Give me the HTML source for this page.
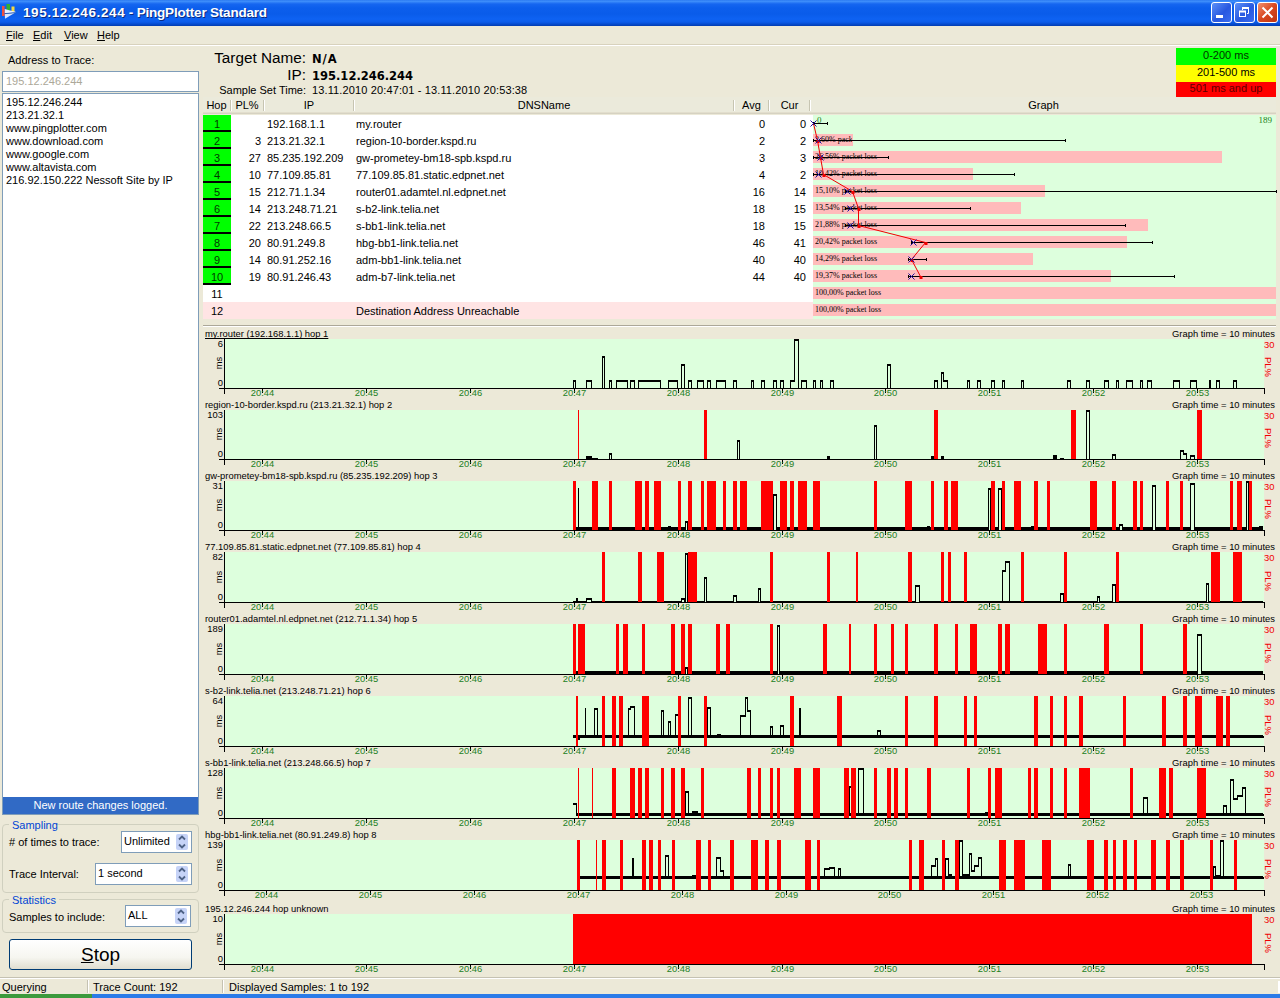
<!DOCTYPE html>
<html><head><meta charset="utf-8"><title>195.12.246.244 - PingPlotter Standard</title>
<style>
html,body{margin:0;padding:0;}
body{width:1280px;height:998px;overflow:hidden;background:#ECE9D8;font-family:"Liberation Sans", sans-serif;font-size:11px;position:relative;}
#r{position:absolute;left:0;top:0;width:1280px;height:998px;overflow:hidden;background:#ECE9D8;}
#r div{position:absolute;box-sizing:border-box;}
#r svg{position:absolute;left:0;top:0;}
.t{white-space:nowrap;line-height:13px;}
u{text-decoration:underline;}
</style></head><body><div id="r">
<div style="left:0;top:0;width:1280px;height:26px;background:linear-gradient(to bottom,#2E7CF2 0px,#3C8CFA 1.5px,#1666F0 4px,#0C5EEC 8px,#0A5CEA 14px,#0E62F2 19px,#0C5CEA 22px,#064CD0 24px,#0340B8 25.5px,#0340B8 26px);"></div>
<svg width="26" height="26" viewBox="0 0 26 26"><rect x="2" y="6" width="2.600" height="10" fill="#F0503C"/><rect x="6.500" y="4" width="3.500" height="6.500" fill="#30B030"/><rect x="11.500" y="6.500" width="3" height="5.500" fill="#F4D840"/><path d="M4.800 9 L10 10.500 L15.500 11.800 L15.500 12.600 L4.800 13.300 Z" fill="#E8F0FF"/><path d="M4.800 14 L15 12.800 L5 18.700 Z" fill="#D8E6FF"/><path d="M4.800 13.600 L15.500 12.700" stroke="#1A4AA0" stroke-width="0.700"/></svg>
<div class="t" style="left:23px;top:4px;font-size:13.5px;color:#fff;font-weight:bold;line-height:18px;letter-spacing:-0.2px;text-shadow:1px 1px 0 #0A2A80;"><span style="letter-spacing:0.6px">195.12.246.244</span> - PingPlotter Standard</div>
<div style="left:1211px;top:2px;width:21px;height:21px;border:1px solid #fff;border-radius:3px;background:linear-gradient(135deg,#5C90F8,#2858E0 55%,#3A6CF0);"></div>
<svg width="1280" height="26" viewBox="0 0 1280 26"><rect x="1216" y="15" width="7" height="3" fill="#fff"/></svg>
<div style="left:1234px;top:2px;width:21px;height:21px;border:1px solid #fff;border-radius:3px;background:linear-gradient(135deg,#5C90F8,#2858E0 55%,#3A6CF0);"></div>
<svg width="1280" height="26" viewBox="0 0 1280 26"><path d="M1242.500 10 V8 H1248.500 V13.500 H1247" fill="none" stroke="#fff" stroke-width="1"/><rect x="1242" y="7" width="7" height="2" fill="#fff"/><rect x="1239.500" y="11.500" width="6" height="5" fill="none" stroke="#fff" stroke-width="1"/><rect x="1239" y="10.500" width="7" height="2" fill="#fff"/></svg>
<div style="left:1257px;top:2px;width:21px;height:21px;border:1px solid #fff;border-radius:3px;background:linear-gradient(135deg,#F09070,#D84820 50%,#C03410);"></div>
<svg width="1280" height="26" viewBox="0 0 1280 26"><path d="M1262.500 7.500 L1272.500 17.500 M1272.500 7.500 L1262.500 17.500" stroke="#fff" stroke-width="2" fill="none"/></svg>
<div style="left:0px;top:45px;width:1280px;height:1px;background:#fff;"></div>
<div style="left:0px;top:44px;width:1280px;height:1px;background:#D8D2BD;"></div>
<div class="t" style="left:6px;top:29px;font-size:11px;color:#000;"><u>F</u>ile</div>
<div class="t" style="left:33px;top:29px;font-size:11px;color:#000;"><u>E</u>dit</div>
<div class="t" style="left:64px;top:29px;font-size:11px;color:#000;"><u>V</u>iew</div>
<div class="t" style="left:97px;top:29px;font-size:11px;color:#000;"><u>H</u>elp</div>
<div class="t" style="left:8px;top:54px;font-size:11px;color:#000;">Address to Trace:</div>
<div style="left:2px;top:71px;width:197px;height:21px;background:#fff;border:1px solid #7F9DB9;"></div>
<div class="t" style="left:6px;top:75px;font-size:11px;color:#ACA899;">195.12.246.244</div>
<div style="left:2px;top:93px;width:197px;height:722px;background:#fff;border:1px solid #7F9DB9;"></div>
<div class="t" style="left:6px;top:96px;font-size:11px;color:#000;">195.12.246.244</div>
<div class="t" style="left:6px;top:109px;font-size:11px;color:#000;">213.21.32.1</div>
<div class="t" style="left:6px;top:122px;font-size:11px;color:#000;">www.pingplotter.com</div>
<div class="t" style="left:6px;top:135px;font-size:11px;color:#000;">www.download.com</div>
<div class="t" style="left:6px;top:148px;font-size:11px;color:#000;">www.google.com</div>
<div class="t" style="left:6px;top:161px;font-size:11px;color:#000;">www.altavista.com</div>
<div class="t" style="left:6px;top:174px;font-size:11px;color:#000;">216.92.150.222 Nessoft Site by IP</div>
<div style="left:3px;top:797px;width:195px;height:17px;background:#316AC5;"></div>
<div class="t" style="left:3px;top:799px;font-size:11px;color:#fff;width:195px;text-align:center;">New route changes logged.</div>
<div style="left:2px;top:824px;width:197px;height:69px;border:1px solid #D0D0BF;border-radius:4px;"></div>
<div style="left:9px;top:823px;width:48px;height:4px;background:#ECE9D8;"></div>
<div class="t" style="left:12px;top:819px;font-size:11px;color:#0046D5;">Sampling</div>
<div style="left:2px;top:899px;width:197px;height:34px;border:1px solid #D0D0BF;border-radius:4px;"></div>
<div style="left:9px;top:898px;width:50px;height:4px;background:#ECE9D8;"></div>
<div class="t" style="left:12px;top:894px;font-size:11px;color:#0046D5;">Statistics</div>
<div class="t" style="left:9px;top:836px;font-size:11px;color:#000;"># of times to trace:</div>
<div style="left:121px;top:831px;width:71px;height:22px;background:#fff;border:1px solid #7F9DB9;"></div>
<div class="t" style="left:124px;top:835px;font-size:11px;color:#000;">Unlimited</div>
<div style="left:176px;top:834px;width:12px;height:16px;background:#C6D3F7;border-radius:2px;"></div>
<svg width="1280" height="998" viewBox="0 0 1280 998"><path d="M179 839.5 L182 836.5 L185 839.5 M179 844.5 L182 847.5 L185 844.5" stroke="#4D6185" stroke-width="1.800" fill="none"/></svg>
<div class="t" style="left:9px;top:868px;font-size:11px;color:#000;">Trace Interval:</div>
<div style="left:95px;top:863px;width:97px;height:22px;background:#fff;border:1px solid #7F9DB9;"></div>
<div class="t" style="left:98px;top:867px;font-size:11px;color:#000;">1 second</div>
<div style="left:176px;top:866px;width:12px;height:16px;background:#C6D3F7;border-radius:2px;"></div>
<svg width="1280" height="998" viewBox="0 0 1280 998"><path d="M179 871.5 L182 868.5 L185 871.5 M179 876.5 L182 879.5 L185 876.5" stroke="#4D6185" stroke-width="1.800" fill="none"/></svg>
<div class="t" style="left:9px;top:911px;font-size:11px;color:#000;">Samples to include:</div>
<div style="left:125px;top:905px;width:66px;height:22px;background:#fff;border:1px solid #7F9DB9;"></div>
<div class="t" style="left:128px;top:909px;font-size:11px;color:#000;">ALL</div>
<div style="left:175px;top:908px;width:12px;height:16px;background:#C6D3F7;border-radius:2px;"></div>
<svg width="1280" height="998" viewBox="0 0 1280 998"><path d="M178 913.5 L181 910.5 L184 913.5 M178 918.5 L181 921.5 L184 918.5" stroke="#4D6185" stroke-width="1.800" fill="none"/></svg>
<div style="left:9px;top:939px;width:183px;height:31px;border:1px solid #003C74;border-radius:3px;background:linear-gradient(to bottom,#fff 0%,#F6F6F0 60%,#E0DED0 100%);"></div>
<div class="t" style="left:9px;top:943px;font-size:19px;color:#000;width:183px;text-align:center;line-height:24px;"><u>S</u>top</div>
<div class="t" style="left:150px;top:49px;font-size:15.3px;color:#000;width:156px;text-align:right;line-height:18px;">Target Name:</div>
<div class="t" style="left:312px;top:51px;font-size:11.5px;color:#000;letter-spacing:1px;font-weight:bold;line-height:16px;font-family:'DejaVu Sans',sans-serif;">N/A</div>
<div class="t" style="left:150px;top:66px;font-size:15.3px;color:#000;width:156px;text-align:right;line-height:18px;">IP:</div>
<div class="t" style="left:312px;top:68px;font-size:11.5px;color:#000;font-weight:bold;line-height:16px;font-family:'DejaVu Sans',sans-serif;">195.12.246.244</div>
<div class="t" style="left:150px;top:84px;font-size:11px;color:#000;width:156px;text-align:right;">Sample Set Time:</div>
<div class="t" style="left:312px;top:84px;font-size:11px;color:#000;letter-spacing:0.13px;">13.11.2010 20:47:01 - 13.11.2010 20:53:38</div>
<div style="left:1176px;top:48px;width:100px;height:17px;background:#00FF00;"></div>
<div style="left:1176px;top:65px;width:100px;height:17px;background:#FFFF00;"></div>
<div style="left:1176px;top:82px;width:100px;height:16px;background:#FF0000;"></div>
<div class="t" style="left:1176px;top:49px;font-size:11px;color:#003000;width:100px;text-align:center;">0-200 ms</div>
<div class="t" style="left:1176px;top:66px;font-size:11px;color:#000;width:100px;text-align:center;">201-500 ms</div>
<div class="t" style="left:1176px;top:82px;font-size:11px;color:#600000;width:100px;text-align:center;">501 ms and up</div>
<div style="left:203px;top:97px;width:1073px;height:17px;background:#EBEADB;"></div>
<div style="left:203px;top:112px;width:1073px;height:1px;background:#E2DECD;"></div>
<div style="left:203px;top:113px;width:1073px;height:1px;background:#D6D2C2;"></div>
<div style="left:230px;top:100px;width:1px;height:11px;background:#C7C5B2;"></div>
<div style="left:231px;top:100px;width:1px;height:11px;background:#fff;"></div>
<div style="left:263px;top:100px;width:1px;height:11px;background:#C7C5B2;"></div>
<div style="left:264px;top:100px;width:1px;height:11px;background:#fff;"></div>
<div style="left:353px;top:100px;width:1px;height:11px;background:#C7C5B2;"></div>
<div style="left:354px;top:100px;width:1px;height:11px;background:#fff;"></div>
<div style="left:733px;top:100px;width:1px;height:11px;background:#C7C5B2;"></div>
<div style="left:734px;top:100px;width:1px;height:11px;background:#fff;"></div>
<div style="left:768px;top:100px;width:1px;height:11px;background:#C7C5B2;"></div>
<div style="left:769px;top:100px;width:1px;height:11px;background:#fff;"></div>
<div style="left:809px;top:100px;width:1px;height:11px;background:#C7C5B2;"></div>
<div style="left:810px;top:100px;width:1px;height:11px;background:#fff;"></div>
<div class="t" style="left:203px;top:99px;font-size:11px;color:#000;width:27px;text-align:center;">Hop</div>
<div class="t" style="left:231px;top:99px;font-size:11px;color:#000;width:32px;text-align:center;">PL%</div>
<div class="t" style="left:265px;top:99px;font-size:11px;color:#000;width:88px;text-align:center;">IP</div>
<div class="t" style="left:355px;top:99px;font-size:11px;color:#000;width:378px;text-align:center;">DNSName</div>
<div class="t" style="left:735px;top:99px;font-size:11px;color:#000;width:33px;text-align:center;">Avg</div>
<div class="t" style="left:770px;top:99px;font-size:11px;color:#000;width:39px;text-align:center;">Cur</div>
<div class="t" style="left:811px;top:99px;font-size:11px;color:#000;width:465px;text-align:center;">Graph</div>
<div style="left:203px;top:115px;width:610px;height:204px;background:#fff;"></div>
<div style="left:813px;top:115px;width:463px;height:204px;background:#DDFFDD;"></div>
<div style="left:203px;top:302px;width:610px;height:17px;background:#FFE4E4;"></div>
<div style="left:203px;top:115px;width:28px;height:17px;background:#00FF00;"></div>
<div style="left:203px;top:130px;width:28px;height:2px;background:#000;"></div>
<div class="t" style="left:203px;top:118px;font-size:11px;color:#003800;width:28px;text-align:center;">1</div>
<div class="t" style="left:267px;top:118px;font-size:11px;color:#000;">192.168.1.1</div>
<div class="t" style="left:356px;top:118px;font-size:11px;color:#000;">my.router</div>
<div class="t" style="left:735px;top:118px;font-size:11px;color:#000;width:30px;text-align:right;">0</div>
<div class="t" style="left:775px;top:118px;font-size:11px;color:#000;width:31px;text-align:right;">0</div>
<div style="left:203px;top:132px;width:28px;height:17px;background:#00FF00;"></div>
<div style="left:203px;top:147px;width:28px;height:2px;background:#000;"></div>
<div class="t" style="left:203px;top:135px;font-size:11px;color:#003800;width:28px;text-align:center;">2</div>
<div class="t" style="left:231px;top:135px;font-size:11px;color:#000;width:30px;text-align:right;">3</div>
<div class="t" style="left:267px;top:135px;font-size:11px;color:#000;">213.21.32.1</div>
<div class="t" style="left:356px;top:135px;font-size:11px;color:#000;">region-10-border.kspd.ru</div>
<div class="t" style="left:735px;top:135px;font-size:11px;color:#000;width:30px;text-align:right;">2</div>
<div class="t" style="left:775px;top:135px;font-size:11px;color:#000;width:31px;text-align:right;">2</div>
<div style="left:203px;top:149px;width:28px;height:17px;background:#00FF00;"></div>
<div style="left:203px;top:164px;width:28px;height:2px;background:#000;"></div>
<div class="t" style="left:203px;top:152px;font-size:11px;color:#003800;width:28px;text-align:center;">3</div>
<div class="t" style="left:231px;top:152px;font-size:11px;color:#000;width:30px;text-align:right;">27</div>
<div class="t" style="left:267px;top:152px;font-size:11px;color:#000;">85.235.192.209</div>
<div class="t" style="left:356px;top:152px;font-size:11px;color:#000;">gw-prometey-bm18-spb.kspd.ru</div>
<div class="t" style="left:735px;top:152px;font-size:11px;color:#000;width:30px;text-align:right;">3</div>
<div class="t" style="left:775px;top:152px;font-size:11px;color:#000;width:31px;text-align:right;">3</div>
<div style="left:203px;top:166px;width:28px;height:17px;background:#00FF00;"></div>
<div style="left:203px;top:181px;width:28px;height:2px;background:#000;"></div>
<div class="t" style="left:203px;top:169px;font-size:11px;color:#003800;width:28px;text-align:center;">4</div>
<div class="t" style="left:231px;top:169px;font-size:11px;color:#000;width:30px;text-align:right;">10</div>
<div class="t" style="left:267px;top:169px;font-size:11px;color:#000;">77.109.85.81</div>
<div class="t" style="left:356px;top:169px;font-size:11px;color:#000;">77.109.85.81.static.edpnet.net</div>
<div class="t" style="left:735px;top:169px;font-size:11px;color:#000;width:30px;text-align:right;">4</div>
<div class="t" style="left:775px;top:169px;font-size:11px;color:#000;width:31px;text-align:right;">2</div>
<div style="left:203px;top:183px;width:28px;height:17px;background:#00FF00;"></div>
<div style="left:203px;top:198px;width:28px;height:2px;background:#000;"></div>
<div class="t" style="left:203px;top:186px;font-size:11px;color:#003800;width:28px;text-align:center;">5</div>
<div class="t" style="left:231px;top:186px;font-size:11px;color:#000;width:30px;text-align:right;">15</div>
<div class="t" style="left:267px;top:186px;font-size:11px;color:#000;">212.71.1.34</div>
<div class="t" style="left:356px;top:186px;font-size:11px;color:#000;">router01.adamtel.nl.edpnet.net</div>
<div class="t" style="left:735px;top:186px;font-size:11px;color:#000;width:30px;text-align:right;">16</div>
<div class="t" style="left:775px;top:186px;font-size:11px;color:#000;width:31px;text-align:right;">14</div>
<div style="left:203px;top:200px;width:28px;height:17px;background:#00FF00;"></div>
<div style="left:203px;top:215px;width:28px;height:2px;background:#000;"></div>
<div class="t" style="left:203px;top:203px;font-size:11px;color:#003800;width:28px;text-align:center;">6</div>
<div class="t" style="left:231px;top:203px;font-size:11px;color:#000;width:30px;text-align:right;">14</div>
<div class="t" style="left:267px;top:203px;font-size:11px;color:#000;">213.248.71.21</div>
<div class="t" style="left:356px;top:203px;font-size:11px;color:#000;">s-b2-link.telia.net</div>
<div class="t" style="left:735px;top:203px;font-size:11px;color:#000;width:30px;text-align:right;">18</div>
<div class="t" style="left:775px;top:203px;font-size:11px;color:#000;width:31px;text-align:right;">15</div>
<div style="left:203px;top:217px;width:28px;height:17px;background:#00FF00;"></div>
<div style="left:203px;top:232px;width:28px;height:2px;background:#000;"></div>
<div class="t" style="left:203px;top:220px;font-size:11px;color:#003800;width:28px;text-align:center;">7</div>
<div class="t" style="left:231px;top:220px;font-size:11px;color:#000;width:30px;text-align:right;">22</div>
<div class="t" style="left:267px;top:220px;font-size:11px;color:#000;">213.248.66.5</div>
<div class="t" style="left:356px;top:220px;font-size:11px;color:#000;">s-bb1-link.telia.net</div>
<div class="t" style="left:735px;top:220px;font-size:11px;color:#000;width:30px;text-align:right;">18</div>
<div class="t" style="left:775px;top:220px;font-size:11px;color:#000;width:31px;text-align:right;">15</div>
<div style="left:203px;top:234px;width:28px;height:17px;background:#00FF00;"></div>
<div style="left:203px;top:249px;width:28px;height:2px;background:#000;"></div>
<div class="t" style="left:203px;top:237px;font-size:11px;color:#003800;width:28px;text-align:center;">8</div>
<div class="t" style="left:231px;top:237px;font-size:11px;color:#000;width:30px;text-align:right;">20</div>
<div class="t" style="left:267px;top:237px;font-size:11px;color:#000;">80.91.249.8</div>
<div class="t" style="left:356px;top:237px;font-size:11px;color:#000;">hbg-bb1-link.telia.net</div>
<div class="t" style="left:735px;top:237px;font-size:11px;color:#000;width:30px;text-align:right;">46</div>
<div class="t" style="left:775px;top:237px;font-size:11px;color:#000;width:31px;text-align:right;">41</div>
<div style="left:203px;top:251px;width:28px;height:17px;background:#00FF00;"></div>
<div style="left:203px;top:266px;width:28px;height:2px;background:#000;"></div>
<div class="t" style="left:203px;top:254px;font-size:11px;color:#003800;width:28px;text-align:center;">9</div>
<div class="t" style="left:231px;top:254px;font-size:11px;color:#000;width:30px;text-align:right;">14</div>
<div class="t" style="left:267px;top:254px;font-size:11px;color:#000;">80.91.252.16</div>
<div class="t" style="left:356px;top:254px;font-size:11px;color:#000;">adm-bb1-link.telia.net</div>
<div class="t" style="left:735px;top:254px;font-size:11px;color:#000;width:30px;text-align:right;">40</div>
<div class="t" style="left:775px;top:254px;font-size:11px;color:#000;width:31px;text-align:right;">40</div>
<div style="left:203px;top:268px;width:28px;height:17px;background:#00FF00;"></div>
<div style="left:203px;top:283px;width:28px;height:2px;background:#000;"></div>
<div class="t" style="left:203px;top:271px;font-size:11px;color:#003800;width:28px;text-align:center;">10</div>
<div class="t" style="left:231px;top:271px;font-size:11px;color:#000;width:30px;text-align:right;">19</div>
<div class="t" style="left:267px;top:271px;font-size:11px;color:#000;">80.91.246.43</div>
<div class="t" style="left:356px;top:271px;font-size:11px;color:#000;">adm-b7-link.telia.net</div>
<div class="t" style="left:735px;top:271px;font-size:11px;color:#000;width:30px;text-align:right;">44</div>
<div class="t" style="left:775px;top:271px;font-size:11px;color:#000;width:31px;text-align:right;">40</div>
<div class="t" style="left:203px;top:288px;font-size:11px;color:#000;width:28px;text-align:center;">11</div>
<div class="t" style="left:203px;top:305px;font-size:11px;color:#000;width:28px;text-align:center;">12</div>
<div class="t" style="left:356px;top:305px;font-size:11px;color:#000;">Destination Address Unreachable</div>
<svg width="1280" height="330" viewBox="0 0 1280 330" shape-rendering="crispEdges"><rect x="813" y="134" width="40" height="12" fill="#FFBBBB"/><rect x="813" y="151" width="409" height="12" fill="#FFBBBB"/><rect x="813" y="168" width="160" height="12" fill="#FFBBBB"/><rect x="813" y="185" width="232" height="12" fill="#FFBBBB"/><rect x="813" y="202" width="208" height="12" fill="#FFBBBB"/><rect x="813" y="219" width="335" height="12" fill="#FFBBBB"/><rect x="813" y="236" width="314" height="12" fill="#FFBBBB"/><rect x="813" y="253" width="220" height="12" fill="#FFBBBB"/><rect x="813" y="270" width="298" height="12" fill="#FFBBBB"/><rect x="813" y="287" width="463" height="12" fill="#FFBBBB"/><rect x="813" y="304" width="463" height="12" fill="#FFBBBB"/></svg>
<div class="t" style="left:815px;top:134px;width:37px;overflow:hidden;font-family:'Liberation Serif',serif;font-size:8px;line-height:12px;color:#000;">2,60% pack</div>
<div class="t" style="left:815px;top:151px;width:406px;overflow:hidden;font-family:'Liberation Serif',serif;font-size:8px;line-height:12px;color:#000;">26,56% packet loss</div>
<div class="t" style="left:815px;top:168px;width:157px;overflow:hidden;font-family:'Liberation Serif',serif;font-size:8px;line-height:12px;color:#000;">10,42% packet loss</div>
<div class="t" style="left:815px;top:185px;width:229px;overflow:hidden;font-family:'Liberation Serif',serif;font-size:8px;line-height:12px;color:#000;">15,10% packet loss</div>
<div class="t" style="left:815px;top:202px;width:205px;overflow:hidden;font-family:'Liberation Serif',serif;font-size:8px;line-height:12px;color:#000;">13,54% packet loss</div>
<div class="t" style="left:815px;top:219px;width:332px;overflow:hidden;font-family:'Liberation Serif',serif;font-size:8px;line-height:12px;color:#000;">21,88% packet loss</div>
<div class="t" style="left:815px;top:236px;width:311px;overflow:hidden;font-family:'Liberation Serif',serif;font-size:8px;line-height:12px;color:#000;">20,42% packet loss</div>
<div class="t" style="left:815px;top:253px;width:217px;overflow:hidden;font-family:'Liberation Serif',serif;font-size:8px;line-height:12px;color:#000;">14,29% packet loss</div>
<div class="t" style="left:815px;top:270px;width:295px;overflow:hidden;font-family:'Liberation Serif',serif;font-size:8px;line-height:12px;color:#000;">19,37% packet loss</div>
<div class="t" style="left:815px;top:287px;width:460px;overflow:hidden;font-family:'Liberation Serif',serif;font-size:8px;line-height:12px;color:#000;">100,00% packet loss</div>
<div class="t" style="left:815px;top:304px;width:460px;overflow:hidden;font-family:'Liberation Serif',serif;font-size:8px;line-height:12px;color:#000;">100,00% packet loss</div>
<svg width="1280" height="330" viewBox="0 0 1280 330"><path d="M813 123.5 H827 M827.5 122 V125 M813.5 122 V125" stroke="#000" stroke-width="1" fill="none" shape-rendering="crispEdges"/><path d="M813 140.5 H1065 M1065.5 139 V142 M813.5 139 V142" stroke="#000" stroke-width="1" fill="none" shape-rendering="crispEdges"/><path d="M813 157.5 H888 M888.5 156 V159 M813.5 156 V159" stroke="#000" stroke-width="1" fill="none" shape-rendering="crispEdges"/><path d="M813 174.5 H1014 M1014.5 173 V176 M813.5 173 V176" stroke="#000" stroke-width="1" fill="none" shape-rendering="crispEdges"/><path d="M845 191.5 H1276 M1276.5 190 V193 M845.5 190 V193" stroke="#000" stroke-width="1" fill="none" shape-rendering="crispEdges"/><path d="M845 208.5 H970 M970.5 207 V210 M845.5 207 V210" stroke="#000" stroke-width="1" fill="none" shape-rendering="crispEdges"/><path d="M845 225.5 H1125 M1125.5 224 V227 M845.5 224 V227" stroke="#000" stroke-width="1" fill="none" shape-rendering="crispEdges"/><path d="M911 242.5 H1152 M1152.5 241 V244 M911.5 241 V244" stroke="#000" stroke-width="1" fill="none" shape-rendering="crispEdges"/><path d="M908 259.5 H926 M926.5 258 V261 M908.5 258 V261" stroke="#000" stroke-width="1" fill="none" shape-rendering="crispEdges"/><path d="M908 276.5 H1174 M1174.5 275 V278 M908.5 275 V278" stroke="#000" stroke-width="1" fill="none" shape-rendering="crispEdges"/><polyline points="813.5,123.5 817.5,140.5 820.5,157.5 823.5,174.5 852.5,191.5 858.5,208.5 858.5,225.5 925.5,242.5 911.5,259.5 920.5,276.5" stroke="#F00000" stroke-width="1" fill="none"/><rect x="816.5" y="140.0" width="3" height="3" fill="#F00000"/><rect x="819.5" y="157.0" width="3" height="3" fill="#F00000"/><rect x="822.5" y="174.0" width="3" height="3" fill="#F00000"/><rect x="851.5" y="191.0" width="3" height="3" fill="#F00000"/><rect x="857.5" y="208.0" width="3" height="3" fill="#F00000"/><rect x="857.5" y="225.0" width="3" height="3" fill="#F00000"/><rect x="924.5" y="242.0" width="3" height="3" fill="#F00000"/><rect x="910.5" y="259.0" width="3" height="3" fill="#F00000"/><rect x="919.5" y="276.0" width="3" height="3" fill="#F00000"/><path d="M810.5 120.5 L816.5 126.5 M816.5 120.5 L810.5 126.5" stroke="#2010A0" stroke-width="1" fill="none"/><path d="M815.5 137.5 L821.5 143.5 M821.5 137.5 L815.5 143.5" stroke="#2010A0" stroke-width="1" fill="none"/><path d="M817.5 154.5 L823.5 160.5 M823.5 154.5 L817.5 160.5" stroke="#2010A0" stroke-width="1" fill="none"/><path d="M815.5 171.5 L821.5 177.5 M821.5 171.5 L815.5 177.5" stroke="#2010A0" stroke-width="1" fill="none"/><path d="M844.5 188.5 L850.5 194.5 M850.5 188.5 L844.5 194.5" stroke="#2010A0" stroke-width="1" fill="none"/><path d="M847.5 205.5 L853.5 211.5 M853.5 205.5 L847.5 211.5" stroke="#2010A0" stroke-width="1" fill="none"/><path d="M847.5 222.5 L853.5 228.5 M853.5 222.5 L847.5 228.5" stroke="#2010A0" stroke-width="1" fill="none"/><path d="M910.5 239.5 L916.5 245.5 M916.5 239.5 L910.5 245.5" stroke="#2010A0" stroke-width="1" fill="none"/><path d="M908.5 256.5 L914.5 262.5 M914.5 256.5 L908.5 262.5" stroke="#2010A0" stroke-width="1" fill="none"/><path d="M908.5 273.5 L914.5 279.5 M914.5 273.5 L908.5 279.5" stroke="#2010A0" stroke-width="1" fill="none"/></svg>
<div class="t" style="left:817px;top:115px;font-size:9px;color:#208020;font-family:'Liberation Serif',serif;line-height:11px;">0</div>
<div class="t" style="left:1240px;top:115px;font-size:9px;color:#208020;width:32px;text-align:right;font-family:'Liberation Serif',serif;line-height:11px;">189</div>
<div style="left:203px;top:325px;width:1073px;height:1px;background:#ACA899;"></div>
<div style="left:203px;top:326px;width:1073px;height:1px;background:#fff;"></div>
<svg width="1280" height="998" viewBox="0 0 1280 998" shape-rendering="crispEdges"><rect x="225" y="339" width="1039" height="49" fill="#DDFFDD"/><rect x="573" y="380" width="3" height="8" fill="#DDFFDD"/><rect x="573" y="380" width="1" height="8" fill="#000"/><rect x="575" y="380" width="1" height="8" fill="#000"/><rect x="573" y="380" width="3" height="2" fill="#000"/><rect x="586" y="380" width="6" height="8" fill="#DDFFDD"/><rect x="586" y="380" width="1" height="8" fill="#000"/><rect x="591" y="380" width="1" height="8" fill="#000"/><rect x="586" y="380" width="6" height="2" fill="#000"/><rect x="602" y="356" width="3" height="32" fill="#DDFFDD"/><rect x="602" y="356" width="1" height="32" fill="#000"/><rect x="604" y="356" width="1" height="32" fill="#000"/><rect x="602" y="356" width="3" height="2" fill="#000"/><rect x="609" y="380" width="3" height="8" fill="#DDFFDD"/><rect x="609" y="380" width="1" height="8" fill="#000"/><rect x="611" y="380" width="1" height="8" fill="#000"/><rect x="609" y="380" width="3" height="2" fill="#000"/><rect x="616" y="380" width="12" height="8" fill="#DDFFDD"/><rect x="616" y="380" width="1" height="8" fill="#000"/><rect x="627" y="380" width="1" height="8" fill="#000"/><rect x="616" y="380" width="12" height="2" fill="#000"/><rect x="630" y="380" width="5" height="8" fill="#DDFFDD"/><rect x="630" y="380" width="1" height="8" fill="#000"/><rect x="634" y="380" width="1" height="8" fill="#000"/><rect x="630" y="380" width="5" height="2" fill="#000"/><rect x="638" y="380" width="23" height="8" fill="#DDFFDD"/><rect x="638" y="380" width="1" height="8" fill="#000"/><rect x="660" y="380" width="1" height="8" fill="#000"/><rect x="638" y="380" width="23" height="2" fill="#000"/><rect x="668" y="380" width="10" height="8" fill="#DDFFDD"/><rect x="668" y="380" width="1" height="8" fill="#000"/><rect x="677" y="380" width="1" height="8" fill="#000"/><rect x="668" y="380" width="10" height="2" fill="#000"/><rect x="681" y="364" width="4" height="24" fill="#DDFFDD"/><rect x="681" y="364" width="1" height="24" fill="#000"/><rect x="684" y="364" width="1" height="24" fill="#000"/><rect x="681" y="364" width="4" height="2" fill="#000"/><rect x="688" y="380" width="4" height="8" fill="#DDFFDD"/><rect x="688" y="380" width="1" height="8" fill="#000"/><rect x="691" y="380" width="1" height="8" fill="#000"/><rect x="688" y="380" width="4" height="2" fill="#000"/><rect x="697" y="380" width="7" height="8" fill="#DDFFDD"/><rect x="697" y="380" width="1" height="8" fill="#000"/><rect x="703" y="380" width="1" height="8" fill="#000"/><rect x="697" y="380" width="7" height="2" fill="#000"/><rect x="707" y="380" width="4" height="8" fill="#DDFFDD"/><rect x="707" y="380" width="1" height="8" fill="#000"/><rect x="710" y="380" width="1" height="8" fill="#000"/><rect x="707" y="380" width="4" height="2" fill="#000"/><rect x="716" y="380" width="10" height="8" fill="#DDFFDD"/><rect x="716" y="380" width="1" height="8" fill="#000"/><rect x="725" y="380" width="1" height="8" fill="#000"/><rect x="716" y="380" width="10" height="2" fill="#000"/><rect x="733" y="380" width="4" height="8" fill="#DDFFDD"/><rect x="733" y="380" width="1" height="8" fill="#000"/><rect x="736" y="380" width="1" height="8" fill="#000"/><rect x="733" y="380" width="4" height="2" fill="#000"/><rect x="751" y="380" width="3" height="8" fill="#DDFFDD"/><rect x="751" y="380" width="1" height="8" fill="#000"/><rect x="753" y="380" width="1" height="8" fill="#000"/><rect x="751" y="380" width="3" height="2" fill="#000"/><rect x="761" y="380" width="4" height="8" fill="#DDFFDD"/><rect x="761" y="380" width="1" height="8" fill="#000"/><rect x="764" y="380" width="1" height="8" fill="#000"/><rect x="761" y="380" width="4" height="2" fill="#000"/><rect x="773" y="380" width="4" height="8" fill="#DDFFDD"/><rect x="773" y="380" width="1" height="8" fill="#000"/><rect x="776" y="380" width="1" height="8" fill="#000"/><rect x="773" y="380" width="4" height="2" fill="#000"/><rect x="780" y="380" width="4" height="8" fill="#DDFFDD"/><rect x="780" y="380" width="1" height="8" fill="#000"/><rect x="783" y="380" width="1" height="8" fill="#000"/><rect x="780" y="380" width="4" height="2" fill="#000"/><rect x="801" y="380" width="6" height="8" fill="#DDFFDD"/><rect x="801" y="380" width="1" height="8" fill="#000"/><rect x="806" y="380" width="1" height="8" fill="#000"/><rect x="801" y="380" width="6" height="2" fill="#000"/><rect x="813" y="380" width="3" height="8" fill="#DDFFDD"/><rect x="813" y="380" width="1" height="8" fill="#000"/><rect x="815" y="380" width="1" height="8" fill="#000"/><rect x="813" y="380" width="3" height="2" fill="#000"/><rect x="820" y="380" width="3" height="8" fill="#DDFFDD"/><rect x="820" y="380" width="1" height="8" fill="#000"/><rect x="822" y="380" width="1" height="8" fill="#000"/><rect x="820" y="380" width="3" height="2" fill="#000"/><rect x="830" y="380" width="4" height="8" fill="#DDFFDD"/><rect x="830" y="380" width="1" height="8" fill="#000"/><rect x="833" y="380" width="1" height="8" fill="#000"/><rect x="830" y="380" width="4" height="2" fill="#000"/><rect x="887" y="364" width="4" height="24" fill="#DDFFDD"/><rect x="887" y="364" width="1" height="24" fill="#000"/><rect x="890" y="364" width="1" height="24" fill="#000"/><rect x="887" y="364" width="4" height="2" fill="#000"/><rect x="934" y="380" width="4" height="8" fill="#DDFFDD"/><rect x="934" y="380" width="1" height="8" fill="#000"/><rect x="937" y="380" width="1" height="8" fill="#000"/><rect x="934" y="380" width="4" height="2" fill="#000"/><rect x="967" y="380" width="3" height="8" fill="#DDFFDD"/><rect x="967" y="380" width="1" height="8" fill="#000"/><rect x="969" y="380" width="1" height="8" fill="#000"/><rect x="967" y="380" width="3" height="2" fill="#000"/><rect x="977" y="380" width="4" height="8" fill="#DDFFDD"/><rect x="977" y="380" width="1" height="8" fill="#000"/><rect x="980" y="380" width="1" height="8" fill="#000"/><rect x="977" y="380" width="4" height="2" fill="#000"/><rect x="991" y="380" width="4" height="8" fill="#DDFFDD"/><rect x="991" y="380" width="1" height="8" fill="#000"/><rect x="994" y="380" width="1" height="8" fill="#000"/><rect x="991" y="380" width="4" height="2" fill="#000"/><rect x="1002" y="380" width="3" height="8" fill="#DDFFDD"/><rect x="1002" y="380" width="1" height="8" fill="#000"/><rect x="1004" y="380" width="1" height="8" fill="#000"/><rect x="1002" y="380" width="3" height="2" fill="#000"/><rect x="1021" y="380" width="3" height="8" fill="#DDFFDD"/><rect x="1021" y="380" width="1" height="8" fill="#000"/><rect x="1023" y="380" width="1" height="8" fill="#000"/><rect x="1021" y="380" width="3" height="2" fill="#000"/><rect x="1067" y="380" width="4" height="8" fill="#DDFFDD"/><rect x="1067" y="380" width="1" height="8" fill="#000"/><rect x="1070" y="380" width="1" height="8" fill="#000"/><rect x="1067" y="380" width="4" height="2" fill="#000"/><rect x="1086" y="380" width="4" height="8" fill="#DDFFDD"/><rect x="1086" y="380" width="1" height="8" fill="#000"/><rect x="1089" y="380" width="1" height="8" fill="#000"/><rect x="1086" y="380" width="4" height="2" fill="#000"/><rect x="1104" y="380" width="5" height="8" fill="#DDFFDD"/><rect x="1104" y="380" width="1" height="8" fill="#000"/><rect x="1108" y="380" width="1" height="8" fill="#000"/><rect x="1104" y="380" width="5" height="2" fill="#000"/><rect x="1116" y="380" width="3" height="8" fill="#DDFFDD"/><rect x="1116" y="380" width="1" height="8" fill="#000"/><rect x="1118" y="380" width="1" height="8" fill="#000"/><rect x="1116" y="380" width="3" height="2" fill="#000"/><rect x="1126" y="380" width="7" height="8" fill="#DDFFDD"/><rect x="1126" y="380" width="1" height="8" fill="#000"/><rect x="1132" y="380" width="1" height="8" fill="#000"/><rect x="1126" y="380" width="7" height="2" fill="#000"/><rect x="1140" y="380" width="3" height="8" fill="#DDFFDD"/><rect x="1140" y="380" width="1" height="8" fill="#000"/><rect x="1142" y="380" width="1" height="8" fill="#000"/><rect x="1140" y="380" width="3" height="2" fill="#000"/><rect x="1147" y="380" width="5" height="8" fill="#DDFFDD"/><rect x="1147" y="380" width="1" height="8" fill="#000"/><rect x="1151" y="380" width="1" height="8" fill="#000"/><rect x="1147" y="380" width="5" height="2" fill="#000"/><rect x="1173" y="380" width="7" height="8" fill="#DDFFDD"/><rect x="1173" y="380" width="1" height="8" fill="#000"/><rect x="1179" y="380" width="1" height="8" fill="#000"/><rect x="1173" y="380" width="7" height="2" fill="#000"/><rect x="1190" y="380" width="7" height="8" fill="#DDFFDD"/><rect x="1190" y="380" width="1" height="8" fill="#000"/><rect x="1196" y="380" width="1" height="8" fill="#000"/><rect x="1190" y="380" width="7" height="2" fill="#000"/><rect x="1209" y="380" width="2" height="8" fill="#DDFFDD"/><rect x="1209" y="380" width="1" height="8" fill="#000"/><rect x="1210" y="380" width="1" height="8" fill="#000"/><rect x="1209" y="380" width="2" height="2" fill="#000"/><rect x="1216" y="380" width="4" height="8" fill="#DDFFDD"/><rect x="1216" y="380" width="1" height="8" fill="#000"/><rect x="1219" y="380" width="1" height="8" fill="#000"/><rect x="1216" y="380" width="4" height="2" fill="#000"/><rect x="1233" y="380" width="4" height="8" fill="#DDFFDD"/><rect x="1233" y="380" width="1" height="8" fill="#000"/><rect x="1236" y="380" width="1" height="8" fill="#000"/><rect x="1233" y="380" width="4" height="2" fill="#000"/><rect x="790" y="380" width="1" height="8" fill="#000"/><rect x="790" y="380" width="5" height="2" fill="#000"/><rect x="794" y="339" width="1" height="43" fill="#000"/><rect x="794" y="339" width="5" height="2" fill="#000"/><rect x="798" y="339" width="1" height="49" fill="#000"/><rect x="941" y="372" width="1" height="16" fill="#000"/><rect x="941" y="372" width="3" height="2" fill="#000"/><rect x="943" y="372" width="1" height="10" fill="#000"/><rect x="943" y="380" width="5" height="2" fill="#000"/><rect x="947" y="380" width="1" height="8" fill="#000"/><rect x="224" y="339" width="1" height="55" fill="#000"/><rect x="219" y="388" width="1046" height="1" fill="#000"/><rect x="1264" y="388" width="1" height="6" fill="#000"/><rect x="262" y="388" width="1" height="5" fill="#000"/><rect x="366" y="388" width="1" height="5" fill="#000"/><rect x="470" y="388" width="1" height="5" fill="#000"/><rect x="574" y="388" width="1" height="5" fill="#000"/><rect x="678" y="388" width="1" height="5" fill="#000"/><rect x="782" y="388" width="1" height="5" fill="#000"/><rect x="885" y="388" width="1" height="5" fill="#000"/><rect x="989" y="388" width="1" height="5" fill="#000"/><rect x="1093" y="388" width="1" height="5" fill="#000"/><rect x="1197" y="388" width="1" height="5" fill="#000"/><rect x="225" y="410" width="1039" height="49" fill="#DDFFDD"/><rect x="586" y="456" width="6" height="3" fill="#000"/><rect x="592" y="458" width="6" height="1" fill="#000"/><rect x="827" y="456" width="3" height="3" fill="#000"/><rect x="931" y="456" width="3" height="3" fill="#000"/><rect x="941" y="456" width="3" height="3" fill="#000"/><rect x="1053" y="455" width="4" height="4" fill="#000"/><rect x="1060" y="458" width="4" height="1" fill="#000"/><rect x="609" y="453" width="3" height="6" fill="#DDFFDD"/><rect x="609" y="453" width="1" height="6" fill="#000"/><rect x="611" y="453" width="1" height="6" fill="#000"/><rect x="609" y="453" width="3" height="2" fill="#000"/><rect x="737" y="440" width="3" height="19" fill="#DDFFDD"/><rect x="737" y="440" width="1" height="19" fill="#000"/><rect x="739" y="440" width="1" height="19" fill="#000"/><rect x="737" y="440" width="3" height="2" fill="#000"/><rect x="874" y="425" width="3" height="34" fill="#DDFFDD"/><rect x="874" y="425" width="1" height="34" fill="#000"/><rect x="876" y="425" width="1" height="34" fill="#000"/><rect x="874" y="425" width="3" height="2" fill="#000"/><rect x="1086" y="410" width="4" height="49" fill="#DDFFDD"/><rect x="1086" y="410" width="1" height="49" fill="#000"/><rect x="1089" y="410" width="1" height="49" fill="#000"/><rect x="1086" y="410" width="4" height="2" fill="#000"/><rect x="1112" y="454" width="4" height="5" fill="#DDFFDD"/><rect x="1112" y="454" width="1" height="5" fill="#000"/><rect x="1115" y="454" width="1" height="5" fill="#000"/><rect x="1112" y="454" width="4" height="2" fill="#000"/><rect x="1190" y="455" width="5" height="4" fill="#DDFFDD"/><rect x="1190" y="455" width="1" height="4" fill="#000"/><rect x="1194" y="455" width="1" height="4" fill="#000"/><rect x="1190" y="455" width="5" height="2" fill="#000"/><rect x="1180" y="450" width="1" height="9" fill="#000"/><rect x="1180" y="450" width="4" height="2" fill="#000"/><rect x="1183" y="450" width="1" height="5" fill="#000"/><rect x="1183" y="453" width="4" height="2" fill="#000"/><rect x="1186" y="453" width="1" height="6" fill="#000"/><rect x="578" y="410" width="1" height="49" fill="#FF0000"/><rect x="704" y="410" width="3" height="49" fill="#FF0000"/><rect x="934" y="410" width="4" height="49" fill="#FF0000"/><rect x="1071" y="410" width="5" height="49" fill="#FF0000"/><rect x="1197" y="410" width="5" height="49" fill="#FF0000"/><rect x="224" y="410" width="1" height="55" fill="#000"/><rect x="219" y="459" width="1046" height="1" fill="#000"/><rect x="1264" y="459" width="1" height="6" fill="#000"/><rect x="262" y="459" width="1" height="5" fill="#000"/><rect x="366" y="459" width="1" height="5" fill="#000"/><rect x="470" y="459" width="1" height="5" fill="#000"/><rect x="574" y="459" width="1" height="5" fill="#000"/><rect x="678" y="459" width="1" height="5" fill="#000"/><rect x="782" y="459" width="1" height="5" fill="#000"/><rect x="885" y="459" width="1" height="5" fill="#000"/><rect x="989" y="459" width="1" height="5" fill="#000"/><rect x="1093" y="459" width="1" height="5" fill="#000"/><rect x="1197" y="459" width="1" height="5" fill="#000"/><rect x="225" y="481" width="1039" height="49" fill="#DDFFDD"/><rect x="576" y="527" width="687" height="3" fill="#000"/><rect x="668" y="526" width="3" height="4" fill="#000"/><rect x="927" y="526" width="3" height="4" fill="#000"/><rect x="1031" y="526" width="3" height="4" fill="#000"/><rect x="1259" y="526" width="4" height="4" fill="#000"/><rect x="578" y="488" width="1" height="42" fill="#000"/><rect x="685" y="521" width="3" height="9" fill="#DDFFDD"/><rect x="685" y="521" width="1" height="9" fill="#000"/><rect x="687" y="521" width="1" height="9" fill="#000"/><rect x="685" y="521" width="3" height="2" fill="#000"/><rect x="773" y="494" width="4" height="36" fill="#DDFFDD"/><rect x="773" y="494" width="1" height="36" fill="#000"/><rect x="776" y="494" width="1" height="36" fill="#000"/><rect x="773" y="494" width="4" height="2" fill="#000"/><rect x="988" y="488" width="3" height="42" fill="#DDFFDD"/><rect x="988" y="488" width="1" height="42" fill="#000"/><rect x="990" y="488" width="1" height="42" fill="#000"/><rect x="988" y="488" width="3" height="2" fill="#000"/><rect x="998" y="488" width="4" height="42" fill="#DDFFDD"/><rect x="998" y="488" width="1" height="42" fill="#000"/><rect x="1001" y="488" width="1" height="42" fill="#000"/><rect x="998" y="488" width="4" height="2" fill="#000"/><rect x="1152" y="485" width="4" height="45" fill="#DDFFDD"/><rect x="1152" y="485" width="1" height="45" fill="#000"/><rect x="1155" y="485" width="1" height="45" fill="#000"/><rect x="1152" y="485" width="4" height="2" fill="#000"/><rect x="1190" y="483" width="5" height="47" fill="#DDFFDD"/><rect x="1190" y="483" width="1" height="47" fill="#000"/><rect x="1194" y="483" width="1" height="47" fill="#000"/><rect x="1190" y="483" width="5" height="2" fill="#000"/><rect x="1246" y="481" width="3" height="49" fill="#DDFFDD"/><rect x="1246" y="481" width="1" height="49" fill="#000"/><rect x="1248" y="481" width="1" height="49" fill="#000"/><rect x="1246" y="481" width="3" height="2" fill="#000"/><rect x="1119" y="524" width="4" height="6" fill="#DDFFDD"/><rect x="1119" y="524" width="1" height="6" fill="#000"/><rect x="1122" y="524" width="1" height="6" fill="#000"/><rect x="1119" y="524" width="4" height="2" fill="#000"/><rect x="573" y="481" width="3" height="49" fill="#FF0000"/><rect x="592" y="481" width="6" height="49" fill="#FF0000"/><rect x="609" y="481" width="3" height="49" fill="#FF0000"/><rect x="635" y="481" width="7" height="49" fill="#FF0000"/><rect x="645" y="481" width="4" height="49" fill="#FF0000"/><rect x="654" y="481" width="7" height="49" fill="#FF0000"/><rect x="678" y="481" width="3" height="49" fill="#FF0000"/><rect x="688" y="481" width="4" height="49" fill="#FF0000"/><rect x="701" y="481" width="3" height="49" fill="#FF0000"/><rect x="707" y="481" width="9" height="49" fill="#FF0000"/><rect x="723" y="481" width="3" height="49" fill="#FF0000"/><rect x="733" y="481" width="4" height="49" fill="#FF0000"/><rect x="740" y="481" width="7" height="49" fill="#FF0000"/><rect x="761" y="481" width="12" height="49" fill="#FF0000"/><rect x="780" y="481" width="7" height="49" fill="#FF0000"/><rect x="790" y="481" width="4" height="49" fill="#FF0000"/><rect x="798" y="481" width="9" height="49" fill="#FF0000"/><rect x="813" y="481" width="7" height="49" fill="#FF0000"/><rect x="874" y="481" width="3" height="49" fill="#FF0000"/><rect x="905" y="481" width="7" height="49" fill="#FF0000"/><rect x="931" y="481" width="3" height="49" fill="#FF0000"/><rect x="944" y="481" width="4" height="49" fill="#FF0000"/><rect x="951" y="481" width="7" height="49" fill="#FF0000"/><rect x="991" y="481" width="4" height="49" fill="#FF0000"/><rect x="1002" y="481" width="3" height="49" fill="#FF0000"/><rect x="1014" y="481" width="7" height="49" fill="#FF0000"/><rect x="1034" y="481" width="4" height="49" fill="#FF0000"/><rect x="1047" y="481" width="3" height="49" fill="#FF0000"/><rect x="1090" y="481" width="7" height="49" fill="#FF0000"/><rect x="1112" y="481" width="4" height="49" fill="#FF0000"/><rect x="1133" y="481" width="4" height="49" fill="#FF0000"/><rect x="1140" y="481" width="3" height="49" fill="#FF0000"/><rect x="1166" y="481" width="3" height="49" fill="#FF0000"/><rect x="1180" y="481" width="3" height="49" fill="#FF0000"/><rect x="1230" y="481" width="3" height="49" fill="#FF0000"/><rect x="1237" y="481" width="5" height="49" fill="#FF0000"/><rect x="1249" y="481" width="3" height="49" fill="#FF0000"/><rect x="224" y="481" width="1" height="55" fill="#000"/><rect x="219" y="530" width="1046" height="1" fill="#000"/><rect x="1264" y="530" width="1" height="6" fill="#000"/><rect x="262" y="530" width="1" height="5" fill="#000"/><rect x="366" y="530" width="1" height="5" fill="#000"/><rect x="470" y="530" width="1" height="5" fill="#000"/><rect x="574" y="530" width="1" height="5" fill="#000"/><rect x="678" y="530" width="1" height="5" fill="#000"/><rect x="782" y="530" width="1" height="5" fill="#000"/><rect x="885" y="530" width="1" height="5" fill="#000"/><rect x="989" y="530" width="1" height="5" fill="#000"/><rect x="1093" y="530" width="1" height="5" fill="#000"/><rect x="1197" y="530" width="1" height="5" fill="#000"/><rect x="225" y="552" width="1039" height="50" fill="#DDFFDD"/><rect x="573" y="601" width="690" height="1" fill="#000"/><rect x="576" y="598" width="2" height="4" fill="#000"/><rect x="586" y="598" width="6" height="4" fill="#DDFFDD"/><rect x="586" y="598" width="1" height="4" fill="#000"/><rect x="591" y="598" width="1" height="4" fill="#000"/><rect x="586" y="598" width="6" height="2" fill="#000"/><rect x="681" y="598" width="4" height="4" fill="#DDFFDD"/><rect x="681" y="598" width="1" height="4" fill="#000"/><rect x="684" y="598" width="1" height="4" fill="#000"/><rect x="681" y="598" width="4" height="2" fill="#000"/><rect x="685" y="553" width="3" height="49" fill="#DDFFDD"/><rect x="685" y="553" width="1" height="49" fill="#000"/><rect x="687" y="553" width="1" height="49" fill="#000"/><rect x="685" y="553" width="3" height="2" fill="#000"/><rect x="704" y="577" width="3" height="25" fill="#DDFFDD"/><rect x="704" y="577" width="1" height="25" fill="#000"/><rect x="706" y="577" width="1" height="25" fill="#000"/><rect x="704" y="577" width="3" height="2" fill="#000"/><rect x="733" y="595" width="4" height="7" fill="#DDFFDD"/><rect x="733" y="595" width="1" height="7" fill="#000"/><rect x="736" y="595" width="1" height="7" fill="#000"/><rect x="733" y="595" width="4" height="2" fill="#000"/><rect x="758" y="588" width="3" height="14" fill="#DDFFDD"/><rect x="758" y="588" width="1" height="14" fill="#000"/><rect x="760" y="588" width="1" height="14" fill="#000"/><rect x="758" y="588" width="3" height="2" fill="#000"/><rect x="915" y="585" width="5" height="17" fill="#DDFFDD"/><rect x="915" y="585" width="1" height="17" fill="#000"/><rect x="919" y="585" width="1" height="17" fill="#000"/><rect x="915" y="585" width="5" height="2" fill="#000"/><rect x="1060" y="593" width="4" height="9" fill="#DDFFDD"/><rect x="1060" y="593" width="1" height="9" fill="#000"/><rect x="1063" y="593" width="1" height="9" fill="#000"/><rect x="1060" y="593" width="4" height="2" fill="#000"/><rect x="1097" y="596" width="3" height="6" fill="#DDFFDD"/><rect x="1097" y="596" width="1" height="6" fill="#000"/><rect x="1099" y="596" width="1" height="6" fill="#000"/><rect x="1097" y="596" width="3" height="2" fill="#000"/><rect x="1112" y="584" width="4" height="18" fill="#DDFFDD"/><rect x="1112" y="584" width="1" height="18" fill="#000"/><rect x="1115" y="584" width="1" height="18" fill="#000"/><rect x="1112" y="584" width="4" height="2" fill="#000"/><rect x="1206" y="583" width="3" height="19" fill="#DDFFDD"/><rect x="1206" y="583" width="1" height="19" fill="#000"/><rect x="1208" y="583" width="1" height="19" fill="#000"/><rect x="1206" y="583" width="3" height="2" fill="#000"/><rect x="1002" y="570" width="1" height="32" fill="#000"/><rect x="1002" y="570" width="4" height="2" fill="#000"/><rect x="1005" y="561" width="1" height="11" fill="#000"/><rect x="1005" y="561" width="5" height="2" fill="#000"/><rect x="1009" y="561" width="1" height="41" fill="#000"/><rect x="602" y="552" width="3" height="50" fill="#FF0000"/><rect x="638" y="552" width="4" height="50" fill="#FF0000"/><rect x="657" y="552" width="7" height="50" fill="#FF0000"/><rect x="688" y="552" width="9" height="50" fill="#FF0000"/><rect x="770" y="552" width="3" height="50" fill="#FF0000"/><rect x="827" y="552" width="3" height="50" fill="#FF0000"/><rect x="856" y="552" width="2" height="50" fill="#FF0000"/><rect x="908" y="552" width="4" height="50" fill="#FF0000"/><rect x="941" y="552" width="3" height="50" fill="#FF0000"/><rect x="948" y="552" width="3" height="50" fill="#FF0000"/><rect x="964" y="552" width="3" height="50" fill="#FF0000"/><rect x="1021" y="552" width="3" height="50" fill="#FF0000"/><rect x="1064" y="552" width="3" height="50" fill="#FF0000"/><rect x="1116" y="552" width="3" height="50" fill="#FF0000"/><rect x="1211" y="552" width="9" height="50" fill="#FF0000"/><rect x="1233" y="552" width="9" height="50" fill="#FF0000"/><rect x="224" y="552" width="1" height="56" fill="#000"/><rect x="219" y="602" width="1046" height="1" fill="#000"/><rect x="1264" y="602" width="1" height="6" fill="#000"/><rect x="262" y="602" width="1" height="5" fill="#000"/><rect x="366" y="602" width="1" height="5" fill="#000"/><rect x="470" y="602" width="1" height="5" fill="#000"/><rect x="574" y="602" width="1" height="5" fill="#000"/><rect x="678" y="602" width="1" height="5" fill="#000"/><rect x="782" y="602" width="1" height="5" fill="#000"/><rect x="885" y="602" width="1" height="5" fill="#000"/><rect x="989" y="602" width="1" height="5" fill="#000"/><rect x="1093" y="602" width="1" height="5" fill="#000"/><rect x="1197" y="602" width="1" height="5" fill="#000"/><rect x="225" y="624" width="1039" height="50" fill="#DDFFDD"/><rect x="576" y="671" width="687" height="3" fill="#000"/><rect x="777" y="625" width="3" height="49" fill="#DDFFDD"/><rect x="777" y="625" width="1" height="49" fill="#000"/><rect x="779" y="625" width="1" height="49" fill="#000"/><rect x="777" y="625" width="3" height="2" fill="#000"/><rect x="1197" y="634" width="5" height="40" fill="#DDFFDD"/><rect x="1197" y="634" width="1" height="40" fill="#000"/><rect x="1201" y="634" width="1" height="40" fill="#000"/><rect x="1197" y="634" width="5" height="2" fill="#000"/><rect x="685" y="667" width="3" height="7" fill="#DDFFDD"/><rect x="685" y="667" width="1" height="7" fill="#000"/><rect x="687" y="667" width="1" height="7" fill="#000"/><rect x="685" y="667" width="3" height="2" fill="#000"/><rect x="573" y="624" width="3" height="50" fill="#FF0000"/><rect x="578" y="624" width="7" height="50" fill="#FF0000"/><rect x="616" y="624" width="3" height="50" fill="#FF0000"/><rect x="623" y="624" width="5" height="50" fill="#FF0000"/><rect x="642" y="624" width="3" height="50" fill="#FF0000"/><rect x="671" y="624" width="4" height="50" fill="#FF0000"/><rect x="681" y="624" width="4" height="50" fill="#FF0000"/><rect x="688" y="624" width="4" height="50" fill="#FF0000"/><rect x="716" y="624" width="4" height="50" fill="#FF0000"/><rect x="726" y="624" width="4" height="50" fill="#FF0000"/><rect x="770" y="624" width="3" height="50" fill="#FF0000"/><rect x="823" y="624" width="4" height="50" fill="#FF0000"/><rect x="849" y="624" width="2" height="50" fill="#FF0000"/><rect x="874" y="624" width="3" height="50" fill="#FF0000"/><rect x="891" y="624" width="3" height="50" fill="#FF0000"/><rect x="905" y="624" width="3" height="50" fill="#FF0000"/><rect x="934" y="624" width="4" height="50" fill="#FF0000"/><rect x="955" y="624" width="3" height="50" fill="#FF0000"/><rect x="970" y="624" width="7" height="50" fill="#FF0000"/><rect x="998" y="624" width="4" height="50" fill="#FF0000"/><rect x="1005" y="624" width="5" height="50" fill="#FF0000"/><rect x="1038" y="624" width="9" height="50" fill="#FF0000"/><rect x="1064" y="624" width="3" height="50" fill="#FF0000"/><rect x="1104" y="624" width="5" height="50" fill="#FF0000"/><rect x="1140" y="624" width="3" height="50" fill="#FF0000"/><rect x="1183" y="624" width="4" height="50" fill="#FF0000"/><rect x="224" y="624" width="1" height="56" fill="#000"/><rect x="219" y="674" width="1046" height="1" fill="#000"/><rect x="1264" y="674" width="1" height="6" fill="#000"/><rect x="262" y="674" width="1" height="5" fill="#000"/><rect x="366" y="674" width="1" height="5" fill="#000"/><rect x="470" y="674" width="1" height="5" fill="#000"/><rect x="574" y="674" width="1" height="5" fill="#000"/><rect x="678" y="674" width="1" height="5" fill="#000"/><rect x="782" y="674" width="1" height="5" fill="#000"/><rect x="885" y="674" width="1" height="5" fill="#000"/><rect x="989" y="674" width="1" height="5" fill="#000"/><rect x="1093" y="674" width="1" height="5" fill="#000"/><rect x="1197" y="674" width="1" height="5" fill="#000"/><rect x="225" y="696" width="1039" height="50" fill="#DDFFDD"/><rect x="573" y="735" width="690" height="3" fill="#000"/><rect x="573" y="735" width="4" height="2" fill="#000"/><rect x="576" y="735" width="1" height="5" fill="#000"/><rect x="576" y="738" width="4" height="2" fill="#000"/><rect x="579" y="736" width="1" height="4" fill="#000"/><rect x="579" y="736" width="7" height="2" fill="#000"/><rect x="585" y="708" width="1" height="30" fill="#000"/><rect x="585" y="708" width="1" height="30" fill="#000"/><rect x="585" y="736" width="10" height="2" fill="#000"/><rect x="594" y="708" width="1" height="30" fill="#000"/><rect x="594" y="708" width="4" height="2" fill="#000"/><rect x="597" y="708" width="1" height="30" fill="#000"/><rect x="597" y="736" width="32" height="2" fill="#000"/><rect x="628" y="708" width="1" height="30" fill="#000"/><rect x="628" y="708" width="3" height="2" fill="#000"/><rect x="630" y="706" width="1" height="4" fill="#000"/><rect x="630" y="706" width="5" height="2" fill="#000"/><rect x="634" y="706" width="1" height="32" fill="#000"/><rect x="634" y="736" width="24" height="2" fill="#000"/><rect x="657" y="735" width="1" height="3" fill="#000"/><rect x="657" y="735" width="5" height="2" fill="#000"/><rect x="661" y="710" width="1" height="27" fill="#000"/><rect x="661" y="710" width="3" height="2" fill="#000"/><rect x="663" y="710" width="1" height="28" fill="#000"/><rect x="663" y="736" width="6" height="2" fill="#000"/><rect x="668" y="721" width="1" height="17" fill="#000"/><rect x="668" y="721" width="3" height="2" fill="#000"/><rect x="670" y="721" width="1" height="16" fill="#000"/><rect x="670" y="735" width="6" height="2" fill="#000"/><rect x="675" y="714" width="1" height="23" fill="#000"/><rect x="675" y="714" width="4" height="2" fill="#000"/><rect x="678" y="714" width="1" height="24" fill="#000"/><rect x="678" y="736" width="11" height="2" fill="#000"/><rect x="688" y="697" width="1" height="41" fill="#000"/><rect x="688" y="697" width="4" height="2" fill="#000"/><rect x="691" y="697" width="1" height="41" fill="#000"/><rect x="691" y="736" width="17" height="2" fill="#000"/><rect x="707" y="707" width="1" height="31" fill="#000"/><rect x="707" y="707" width="4" height="2" fill="#000"/><rect x="710" y="707" width="1" height="31" fill="#000"/><rect x="710" y="736" width="8" height="2" fill="#000"/><rect x="717" y="734" width="1" height="4" fill="#000"/><rect x="717" y="734" width="4" height="2" fill="#000"/><rect x="720" y="734" width="1" height="4" fill="#000"/><rect x="720" y="736" width="21" height="2" fill="#000"/><rect x="740" y="715" width="1" height="23" fill="#000"/><rect x="740" y="715" width="6" height="2" fill="#000"/><rect x="745" y="697" width="1" height="20" fill="#000"/><rect x="745" y="697" width="3" height="2" fill="#000"/><rect x="747" y="697" width="1" height="15" fill="#000"/><rect x="747" y="710" width="4" height="2" fill="#000"/><rect x="750" y="710" width="1" height="28" fill="#000"/><rect x="750" y="736" width="21" height="2" fill="#000"/><rect x="770" y="726" width="1" height="12" fill="#000"/><rect x="770" y="726" width="3" height="2" fill="#000"/><rect x="772" y="726" width="1" height="11" fill="#000"/><rect x="772" y="735" width="6" height="2" fill="#000"/><rect x="777" y="735" width="1" height="3" fill="#000"/><rect x="777" y="736" width="4" height="2" fill="#000"/><rect x="780" y="725" width="1" height="13" fill="#000"/><rect x="780" y="725" width="4" height="2" fill="#000"/><rect x="783" y="725" width="1" height="13" fill="#000"/><rect x="783" y="736" width="6" height="2" fill="#000"/><rect x="788" y="735" width="1" height="3" fill="#000"/><rect x="788" y="735" width="12" height="2" fill="#000"/><rect x="799" y="708" width="1" height="29" fill="#000"/><rect x="799" y="708" width="2" height="2" fill="#000"/><rect x="800" y="708" width="1" height="30" fill="#000"/><rect x="800" y="736" width="78" height="2" fill="#000"/><rect x="877" y="730" width="1" height="8" fill="#000"/><rect x="877" y="730" width="4" height="2" fill="#000"/><rect x="880" y="730" width="1" height="8" fill="#000"/><rect x="880" y="736" width="384" height="2" fill="#000"/><rect x="576" y="696" width="2" height="50" fill="#FF0000"/><rect x="602" y="696" width="3" height="50" fill="#FF0000"/><rect x="612" y="696" width="4" height="50" fill="#FF0000"/><rect x="619" y="696" width="4" height="50" fill="#FF0000"/><rect x="642" y="696" width="7" height="50" fill="#FF0000"/><rect x="678" y="696" width="3" height="50" fill="#FF0000"/><rect x="704" y="696" width="3" height="50" fill="#FF0000"/><rect x="790" y="696" width="4" height="50" fill="#FF0000"/><rect x="837" y="696" width="5" height="50" fill="#FF0000"/><rect x="905" y="696" width="3" height="50" fill="#FF0000"/><rect x="934" y="696" width="4" height="50" fill="#FF0000"/><rect x="964" y="696" width="3" height="50" fill="#FF0000"/><rect x="974" y="696" width="3" height="50" fill="#FF0000"/><rect x="1034" y="696" width="4" height="50" fill="#FF0000"/><rect x="1050" y="696" width="3" height="50" fill="#FF0000"/><rect x="1064" y="696" width="3" height="50" fill="#FF0000"/><rect x="1079" y="696" width="4" height="50" fill="#FF0000"/><rect x="1123" y="696" width="3" height="50" fill="#FF0000"/><rect x="1162" y="696" width="4" height="50" fill="#FF0000"/><rect x="1183" y="696" width="4" height="50" fill="#FF0000"/><rect x="1195" y="696" width="7" height="50" fill="#FF0000"/><rect x="1216" y="696" width="7" height="50" fill="#FF0000"/><rect x="1226" y="696" width="4" height="50" fill="#FF0000"/><rect x="224" y="696" width="1" height="56" fill="#000"/><rect x="219" y="746" width="1046" height="1" fill="#000"/><rect x="1264" y="746" width="1" height="6" fill="#000"/><rect x="262" y="746" width="1" height="5" fill="#000"/><rect x="366" y="746" width="1" height="5" fill="#000"/><rect x="470" y="746" width="1" height="5" fill="#000"/><rect x="574" y="746" width="1" height="5" fill="#000"/><rect x="678" y="746" width="1" height="5" fill="#000"/><rect x="782" y="746" width="1" height="5" fill="#000"/><rect x="885" y="746" width="1" height="5" fill="#000"/><rect x="989" y="746" width="1" height="5" fill="#000"/><rect x="1093" y="746" width="1" height="5" fill="#000"/><rect x="1197" y="746" width="1" height="5" fill="#000"/><rect x="225" y="768" width="1039" height="50" fill="#DDFFDD"/><rect x="576" y="813" width="687" height="3" fill="#000"/><rect x="573" y="803" width="4" height="2" fill="#000"/><rect x="576" y="803" width="1" height="13" fill="#000"/><rect x="576" y="814" width="110" height="2" fill="#000"/><rect x="685" y="791" width="1" height="25" fill="#000"/><rect x="685" y="791" width="4" height="2" fill="#000"/><rect x="688" y="791" width="1" height="25" fill="#000"/><rect x="688" y="814" width="5" height="2" fill="#000"/><rect x="692" y="811" width="1" height="5" fill="#000"/><rect x="692" y="811" width="6" height="2" fill="#000"/><rect x="697" y="811" width="1" height="5" fill="#000"/><rect x="697" y="814" width="153" height="2" fill="#000"/><rect x="849" y="786" width="1" height="30" fill="#000"/><rect x="849" y="786" width="3" height="2" fill="#000"/><rect x="851" y="786" width="1" height="30" fill="#000"/><rect x="851" y="814" width="8" height="2" fill="#000"/><rect x="858" y="768" width="1" height="48" fill="#000"/><rect x="858" y="768" width="6" height="2" fill="#000"/><rect x="863" y="768" width="1" height="48" fill="#000"/><rect x="863" y="814" width="123" height="2" fill="#000"/><rect x="985" y="812" width="1" height="4" fill="#000"/><rect x="985" y="812" width="4" height="2" fill="#000"/><rect x="988" y="812" width="1" height="4" fill="#000"/><rect x="988" y="814" width="156" height="2" fill="#000"/><rect x="1143" y="797" width="1" height="19" fill="#000"/><rect x="1143" y="797" width="5" height="2" fill="#000"/><rect x="1147" y="797" width="1" height="19" fill="#000"/><rect x="1147" y="814" width="77" height="2" fill="#000"/><rect x="1223" y="805" width="1" height="11" fill="#000"/><rect x="1223" y="805" width="4" height="2" fill="#000"/><rect x="1226" y="805" width="1" height="11" fill="#000"/><rect x="1226" y="814" width="5" height="2" fill="#000"/><rect x="1230" y="779" width="1" height="37" fill="#000"/><rect x="1230" y="779" width="4" height="2" fill="#000"/><rect x="1233" y="779" width="1" height="21" fill="#000"/><rect x="1233" y="798" width="5" height="2" fill="#000"/><rect x="1237" y="795" width="1" height="5" fill="#000"/><rect x="1237" y="795" width="6" height="2" fill="#000"/><rect x="1242" y="787" width="1" height="10" fill="#000"/><rect x="1242" y="787" width="4" height="2" fill="#000"/><rect x="1245" y="787" width="1" height="29" fill="#000"/><rect x="1245" y="814" width="19" height="2" fill="#000"/><rect x="578" y="768" width="1" height="50" fill="#FF0000"/><rect x="592" y="768" width="1" height="50" fill="#FF0000"/><rect x="612" y="768" width="4" height="50" fill="#FF0000"/><rect x="630" y="768" width="5" height="50" fill="#FF0000"/><rect x="638" y="768" width="4" height="50" fill="#FF0000"/><rect x="645" y="768" width="4" height="50" fill="#FF0000"/><rect x="661" y="768" width="3" height="50" fill="#FF0000"/><rect x="671" y="768" width="4" height="50" fill="#FF0000"/><rect x="681" y="768" width="4" height="50" fill="#FF0000"/><rect x="701" y="768" width="3" height="50" fill="#FF0000"/><rect x="747" y="768" width="4" height="50" fill="#FF0000"/><rect x="758" y="768" width="3" height="50" fill="#FF0000"/><rect x="770" y="768" width="3" height="50" fill="#FF0000"/><rect x="777" y="768" width="3" height="50" fill="#FF0000"/><rect x="794" y="768" width="7" height="50" fill="#FF0000"/><rect x="813" y="768" width="7" height="50" fill="#FF0000"/><rect x="844" y="768" width="5" height="50" fill="#FF0000"/><rect x="851" y="768" width="5" height="50" fill="#FF0000"/><rect x="874" y="768" width="3" height="50" fill="#FF0000"/><rect x="887" y="768" width="4" height="50" fill="#FF0000"/><rect x="894" y="768" width="4" height="50" fill="#FF0000"/><rect x="905" y="768" width="3" height="50" fill="#FF0000"/><rect x="927" y="768" width="4" height="50" fill="#FF0000"/><rect x="967" y="768" width="3" height="50" fill="#FF0000"/><rect x="988" y="768" width="3" height="50" fill="#FF0000"/><rect x="995" y="768" width="7" height="50" fill="#FF0000"/><rect x="1028" y="768" width="3" height="50" fill="#FF0000"/><rect x="1034" y="768" width="4" height="50" fill="#FF0000"/><rect x="1050" y="768" width="3" height="50" fill="#FF0000"/><rect x="1064" y="768" width="3" height="50" fill="#FF0000"/><rect x="1079" y="768" width="11" height="50" fill="#FF0000"/><rect x="1130" y="768" width="3" height="50" fill="#FF0000"/><rect x="1159" y="768" width="7" height="50" fill="#FF0000"/><rect x="1169" y="768" width="4" height="50" fill="#FF0000"/><rect x="1197" y="768" width="9" height="50" fill="#FF0000"/><rect x="224" y="768" width="1" height="56" fill="#000"/><rect x="219" y="818" width="1046" height="1" fill="#000"/><rect x="1264" y="818" width="1" height="6" fill="#000"/><rect x="262" y="818" width="1" height="5" fill="#000"/><rect x="366" y="818" width="1" height="5" fill="#000"/><rect x="470" y="818" width="1" height="5" fill="#000"/><rect x="574" y="818" width="1" height="5" fill="#000"/><rect x="678" y="818" width="1" height="5" fill="#000"/><rect x="782" y="818" width="1" height="5" fill="#000"/><rect x="885" y="818" width="1" height="5" fill="#000"/><rect x="989" y="818" width="1" height="5" fill="#000"/><rect x="1093" y="818" width="1" height="5" fill="#000"/><rect x="1197" y="818" width="1" height="5" fill="#000"/><rect x="225" y="840" width="1039" height="50" fill="#DDFFDD"/><rect x="580" y="876" width="683" height="3" fill="#000"/><rect x="580" y="877" width="9" height="2" fill="#000"/><rect x="588" y="876" width="1" height="3" fill="#000"/><rect x="588" y="876" width="7" height="2" fill="#000"/><rect x="594" y="876" width="1" height="3" fill="#000"/><rect x="594" y="877" width="32" height="2" fill="#000"/><rect x="625" y="876" width="1" height="3" fill="#000"/><rect x="625" y="876" width="8" height="2" fill="#000"/><rect x="632" y="858" width="1" height="20" fill="#000"/><rect x="632" y="858" width="2" height="2" fill="#000"/><rect x="633" y="858" width="1" height="20" fill="#000"/><rect x="633" y="876" width="5" height="2" fill="#000"/><rect x="637" y="876" width="1" height="3" fill="#000"/><rect x="637" y="877" width="29" height="2" fill="#000"/><rect x="665" y="855" width="1" height="24" fill="#000"/><rect x="665" y="855" width="4" height="2" fill="#000"/><rect x="668" y="855" width="1" height="24" fill="#000"/><rect x="668" y="877" width="25" height="2" fill="#000"/><rect x="692" y="875" width="1" height="4" fill="#000"/><rect x="692" y="875" width="4" height="2" fill="#000"/><rect x="695" y="875" width="1" height="4" fill="#000"/><rect x="695" y="877" width="22" height="2" fill="#000"/><rect x="716" y="857" width="1" height="22" fill="#000"/><rect x="716" y="857" width="5" height="2" fill="#000"/><rect x="720" y="857" width="1" height="15" fill="#000"/><rect x="720" y="870" width="4" height="2" fill="#000"/><rect x="723" y="870" width="1" height="9" fill="#000"/><rect x="723" y="877" width="20" height="2" fill="#000"/><rect x="742" y="876" width="1" height="3" fill="#000"/><rect x="742" y="876" width="4" height="2" fill="#000"/><rect x="745" y="876" width="1" height="3" fill="#000"/><rect x="745" y="877" width="38" height="2" fill="#000"/><rect x="782" y="876" width="1" height="3" fill="#000"/><rect x="782" y="876" width="43" height="2" fill="#000"/><rect x="824" y="868" width="1" height="10" fill="#000"/><rect x="824" y="868" width="6" height="2" fill="#000"/><rect x="829" y="867" width="1" height="3" fill="#000"/><rect x="829" y="867" width="6" height="2" fill="#000"/><rect x="834" y="867" width="1" height="12" fill="#000"/><rect x="834" y="877" width="5" height="2" fill="#000"/><rect x="838" y="868" width="1" height="11" fill="#000"/><rect x="838" y="868" width="3" height="2" fill="#000"/><rect x="840" y="868" width="1" height="11" fill="#000"/><rect x="840" y="877" width="92" height="2" fill="#000"/><rect x="931" y="865" width="1" height="14" fill="#000"/><rect x="931" y="865" width="5" height="2" fill="#000"/><rect x="935" y="858" width="1" height="9" fill="#000"/><rect x="935" y="858" width="3" height="2" fill="#000"/><rect x="937" y="858" width="1" height="21" fill="#000"/><rect x="937" y="877" width="9" height="2" fill="#000"/><rect x="945" y="858" width="1" height="21" fill="#000"/><rect x="945" y="858" width="4" height="2" fill="#000"/><rect x="948" y="858" width="1" height="18" fill="#000"/><rect x="948" y="874" width="4" height="2" fill="#000"/><rect x="951" y="874" width="1" height="5" fill="#000"/><rect x="951" y="877" width="9" height="2" fill="#000"/><rect x="959" y="840" width="1" height="39" fill="#000"/><rect x="959" y="840" width="4" height="2" fill="#000"/><rect x="962" y="840" width="1" height="36" fill="#000"/><rect x="962" y="874" width="8" height="2" fill="#000"/><rect x="969" y="853" width="1" height="23" fill="#000"/><rect x="969" y="853" width="3" height="2" fill="#000"/><rect x="971" y="853" width="1" height="19" fill="#000"/><rect x="971" y="870" width="4" height="2" fill="#000"/><rect x="974" y="865" width="1" height="7" fill="#000"/><rect x="974" y="865" width="5" height="2" fill="#000"/><rect x="978" y="857" width="1" height="10" fill="#000"/><rect x="978" y="857" width="4" height="2" fill="#000"/><rect x="981" y="857" width="1" height="22" fill="#000"/><rect x="981" y="877" width="28" height="2" fill="#000"/><rect x="1008" y="876" width="1" height="3" fill="#000"/><rect x="1008" y="876" width="5" height="2" fill="#000"/><rect x="1012" y="876" width="1" height="3" fill="#000"/><rect x="1012" y="877" width="57" height="2" fill="#000"/><rect x="1068" y="864" width="1" height="15" fill="#000"/><rect x="1068" y="864" width="3" height="2" fill="#000"/><rect x="1070" y="864" width="1" height="15" fill="#000"/><rect x="1070" y="877" width="95" height="2" fill="#000"/><rect x="1164" y="876" width="1" height="3" fill="#000"/><rect x="1164" y="876" width="7" height="2" fill="#000"/><rect x="1170" y="876" width="1" height="3" fill="#000"/><rect x="1170" y="877" width="44" height="2" fill="#000"/><rect x="1213" y="866" width="1" height="13" fill="#000"/><rect x="1213" y="866" width="3" height="2" fill="#000"/><rect x="1215" y="866" width="1" height="11" fill="#000"/><rect x="1215" y="875" width="6" height="2" fill="#000"/><rect x="1220" y="840" width="1" height="37" fill="#000"/><rect x="1220" y="840" width="4" height="2" fill="#000"/><rect x="1223" y="840" width="1" height="39" fill="#000"/><rect x="1223" y="877" width="41" height="2" fill="#000"/><rect x="577" y="840" width="3" height="50" fill="#FF0000"/><rect x="596" y="840" width="1" height="50" fill="#FF0000"/><rect x="602" y="840" width="4" height="50" fill="#FF0000"/><rect x="620" y="840" width="3" height="50" fill="#FF0000"/><rect x="642" y="840" width="4" height="50" fill="#FF0000"/><rect x="649" y="840" width="4" height="50" fill="#FF0000"/><rect x="658" y="840" width="3" height="50" fill="#FF0000"/><rect x="672" y="840" width="3" height="50" fill="#FF0000"/><rect x="696" y="840" width="5" height="50" fill="#FF0000"/><rect x="708" y="840" width="3" height="50" fill="#FF0000"/><rect x="730" y="840" width="4" height="50" fill="#FF0000"/><rect x="751" y="840" width="7" height="50" fill="#FF0000"/><rect x="765" y="840" width="4" height="50" fill="#FF0000"/><rect x="777" y="840" width="4" height="50" fill="#FF0000"/><rect x="805" y="840" width="6" height="50" fill="#FF0000"/><rect x="817" y="840" width="3" height="50" fill="#FF0000"/><rect x="909" y="840" width="3" height="50" fill="#FF0000"/><rect x="919" y="840" width="5" height="50" fill="#FF0000"/><rect x="942" y="840" width="3" height="50" fill="#FF0000"/><rect x="955" y="840" width="4" height="50" fill="#FF0000"/><rect x="999" y="840" width="7" height="50" fill="#FF0000"/><rect x="1014" y="840" width="11" height="50" fill="#FF0000"/><rect x="1042" y="840" width="9" height="50" fill="#FF0000"/><rect x="1087" y="840" width="7" height="50" fill="#FF0000"/><rect x="1104" y="840" width="4" height="50" fill="#FF0000"/><rect x="1113" y="840" width="3" height="50" fill="#FF0000"/><rect x="1123" y="840" width="4" height="50" fill="#FF0000"/><rect x="1134" y="840" width="3" height="50" fill="#FF0000"/><rect x="1151" y="840" width="5" height="50" fill="#FF0000"/><rect x="1166" y="840" width="4" height="50" fill="#FF0000"/><rect x="1180" y="840" width="4" height="50" fill="#FF0000"/><rect x="1210" y="840" width="3" height="50" fill="#FF0000"/><rect x="1234" y="840" width="3" height="50" fill="#FF0000"/><rect x="224" y="840" width="1" height="56" fill="#000"/><rect x="219" y="890" width="1046" height="1" fill="#000"/><rect x="1264" y="890" width="1" height="6" fill="#000"/><rect x="266" y="890" width="1" height="5" fill="#000"/><rect x="370" y="890" width="1" height="5" fill="#000"/><rect x="474" y="890" width="1" height="5" fill="#000"/><rect x="578" y="890" width="1" height="5" fill="#000"/><rect x="682" y="890" width="1" height="5" fill="#000"/><rect x="786" y="890" width="1" height="5" fill="#000"/><rect x="889" y="890" width="1" height="5" fill="#000"/><rect x="993" y="890" width="1" height="5" fill="#000"/><rect x="1097" y="890" width="1" height="5" fill="#000"/><rect x="1201" y="890" width="1" height="5" fill="#000"/><rect x="225" y="914" width="1027" height="50" fill="#DDFFDD"/><rect x="573" y="914" width="679" height="50" fill="#FF0000"/><rect x="224" y="914" width="1" height="56" fill="#000"/><rect x="219" y="964" width="1046" height="1" fill="#000"/><rect x="1264" y="964" width="1" height="6" fill="#000"/><rect x="262" y="964" width="1" height="5" fill="#000"/><rect x="366" y="964" width="1" height="5" fill="#000"/><rect x="470" y="964" width="1" height="5" fill="#000"/><rect x="574" y="964" width="1" height="5" fill="#000"/><rect x="678" y="964" width="1" height="5" fill="#000"/><rect x="782" y="964" width="1" height="5" fill="#000"/><rect x="885" y="964" width="1" height="5" fill="#000"/><rect x="989" y="964" width="1" height="5" fill="#000"/><rect x="1093" y="964" width="1" height="5" fill="#000"/><rect x="1197" y="964" width="1" height="5" fill="#000"/></svg>
<div class="t" style="left:205px;top:328px;font-size:9.4px;color:#000;line-height:11px;text-decoration:underline;text-decoration-skip-ink:none;text-underline-offset:1px;">my.router (192.168.1.1) hop 1</div>
<div class="t" style="left:1125px;top:328px;font-size:9.4px;color:#000;width:150px;text-align:right;line-height:11px;">Graph time = 10 minutes</div>
<div class="t" style="left:190px;top:338px;font-size:9.4px;color:#000;width:33px;text-align:right;line-height:11px;">6</div>
<div class="t" style="left:190px;top:377px;font-size:9.4px;color:#000;width:33px;text-align:right;line-height:11px;">0</div>
<div class="t" style="left:211px;top:357px;width:16px;height:12px;font-size:9.4px;line-height:12px;text-align:center;transform:rotate(-90deg);">ms</div>
<div class="t" style="left:1264px;top:339px;font-size:9.4px;color:#F00000;line-height:11px;">30</div>
<div class="t" style="left:1256px;top:361px;width:24px;height:12px;font-size:9.4px;line-height:12px;text-align:center;color:#F00000;transform:rotate(90deg);">PL%</div>
<div class="t" style="left:242px;top:387px;width:41px;text-align:center;font-size:9.4px;line-height:11px;color:#237F23;">20:44</div>
<div class="t" style="left:346px;top:387px;width:41px;text-align:center;font-size:9.4px;line-height:11px;color:#237F23;">20:45</div>
<div class="t" style="left:450px;top:387px;width:41px;text-align:center;font-size:9.4px;line-height:11px;color:#237F23;">20:46</div>
<div class="t" style="left:554px;top:387px;width:41px;text-align:center;font-size:9.4px;line-height:11px;color:#237F23;">20:47</div>
<div class="t" style="left:658px;top:387px;width:41px;text-align:center;font-size:9.4px;line-height:11px;color:#237F23;">20:48</div>
<div class="t" style="left:762px;top:387px;width:41px;text-align:center;font-size:9.4px;line-height:11px;color:#237F23;">20:49</div>
<div class="t" style="left:865px;top:387px;width:41px;text-align:center;font-size:9.4px;line-height:11px;color:#237F23;">20:50</div>
<div class="t" style="left:969px;top:387px;width:41px;text-align:center;font-size:9.4px;line-height:11px;color:#237F23;">20:51</div>
<div class="t" style="left:1073px;top:387px;width:41px;text-align:center;font-size:9.4px;line-height:11px;color:#237F23;">20:52</div>
<div class="t" style="left:1177px;top:387px;width:41px;text-align:center;font-size:9.4px;line-height:11px;color:#237F23;">20:53</div>
<div class="t" style="left:205px;top:399px;font-size:9.4px;color:#000;line-height:11px;">region-10-border.kspd.ru (213.21.32.1) hop 2</div>
<div class="t" style="left:1125px;top:399px;font-size:9.4px;color:#000;width:150px;text-align:right;line-height:11px;">Graph time = 10 minutes</div>
<div class="t" style="left:190px;top:409px;font-size:9.4px;color:#000;width:33px;text-align:right;line-height:11px;">103</div>
<div class="t" style="left:190px;top:448px;font-size:9.4px;color:#000;width:33px;text-align:right;line-height:11px;">0</div>
<div class="t" style="left:211px;top:428px;width:16px;height:12px;font-size:9.4px;line-height:12px;text-align:center;transform:rotate(-90deg);">ms</div>
<div class="t" style="left:1264px;top:410px;font-size:9.4px;color:#F00000;line-height:11px;">30</div>
<div class="t" style="left:1256px;top:432px;width:24px;height:12px;font-size:9.4px;line-height:12px;text-align:center;color:#F00000;transform:rotate(90deg);">PL%</div>
<div class="t" style="left:242px;top:458px;width:41px;text-align:center;font-size:9.4px;line-height:11px;color:#237F23;">20:44</div>
<div class="t" style="left:346px;top:458px;width:41px;text-align:center;font-size:9.4px;line-height:11px;color:#237F23;">20:45</div>
<div class="t" style="left:450px;top:458px;width:41px;text-align:center;font-size:9.4px;line-height:11px;color:#237F23;">20:46</div>
<div class="t" style="left:554px;top:458px;width:41px;text-align:center;font-size:9.4px;line-height:11px;color:#237F23;">20:47</div>
<div class="t" style="left:658px;top:458px;width:41px;text-align:center;font-size:9.4px;line-height:11px;color:#237F23;">20:48</div>
<div class="t" style="left:762px;top:458px;width:41px;text-align:center;font-size:9.4px;line-height:11px;color:#237F23;">20:49</div>
<div class="t" style="left:865px;top:458px;width:41px;text-align:center;font-size:9.4px;line-height:11px;color:#237F23;">20:50</div>
<div class="t" style="left:969px;top:458px;width:41px;text-align:center;font-size:9.4px;line-height:11px;color:#237F23;">20:51</div>
<div class="t" style="left:1073px;top:458px;width:41px;text-align:center;font-size:9.4px;line-height:11px;color:#237F23;">20:52</div>
<div class="t" style="left:1177px;top:458px;width:41px;text-align:center;font-size:9.4px;line-height:11px;color:#237F23;">20:53</div>
<div class="t" style="left:205px;top:470px;font-size:9.4px;color:#000;line-height:11px;">gw-prometey-bm18-spb.kspd.ru (85.235.192.209) hop 3</div>
<div class="t" style="left:1125px;top:470px;font-size:9.4px;color:#000;width:150px;text-align:right;line-height:11px;">Graph time = 10 minutes</div>
<div class="t" style="left:190px;top:480px;font-size:9.4px;color:#000;width:33px;text-align:right;line-height:11px;">31</div>
<div class="t" style="left:190px;top:519px;font-size:9.4px;color:#000;width:33px;text-align:right;line-height:11px;">0</div>
<div class="t" style="left:211px;top:499px;width:16px;height:12px;font-size:9.4px;line-height:12px;text-align:center;transform:rotate(-90deg);">ms</div>
<div class="t" style="left:1264px;top:481px;font-size:9.4px;color:#F00000;line-height:11px;">30</div>
<div class="t" style="left:1256px;top:503px;width:24px;height:12px;font-size:9.4px;line-height:12px;text-align:center;color:#F00000;transform:rotate(90deg);">PL%</div>
<div class="t" style="left:242px;top:529px;width:41px;text-align:center;font-size:9.4px;line-height:11px;color:#237F23;">20:44</div>
<div class="t" style="left:346px;top:529px;width:41px;text-align:center;font-size:9.4px;line-height:11px;color:#237F23;">20:45</div>
<div class="t" style="left:450px;top:529px;width:41px;text-align:center;font-size:9.4px;line-height:11px;color:#237F23;">20:46</div>
<div class="t" style="left:554px;top:529px;width:41px;text-align:center;font-size:9.4px;line-height:11px;color:#237F23;">20:47</div>
<div class="t" style="left:658px;top:529px;width:41px;text-align:center;font-size:9.4px;line-height:11px;color:#237F23;">20:48</div>
<div class="t" style="left:762px;top:529px;width:41px;text-align:center;font-size:9.4px;line-height:11px;color:#237F23;">20:49</div>
<div class="t" style="left:865px;top:529px;width:41px;text-align:center;font-size:9.4px;line-height:11px;color:#237F23;">20:50</div>
<div class="t" style="left:969px;top:529px;width:41px;text-align:center;font-size:9.4px;line-height:11px;color:#237F23;">20:51</div>
<div class="t" style="left:1073px;top:529px;width:41px;text-align:center;font-size:9.4px;line-height:11px;color:#237F23;">20:52</div>
<div class="t" style="left:1177px;top:529px;width:41px;text-align:center;font-size:9.4px;line-height:11px;color:#237F23;">20:53</div>
<div class="t" style="left:205px;top:541px;font-size:9.4px;color:#000;line-height:11px;">77.109.85.81.static.edpnet.net (77.109.85.81) hop 4</div>
<div class="t" style="left:1125px;top:541px;font-size:9.4px;color:#000;width:150px;text-align:right;line-height:11px;">Graph time = 10 minutes</div>
<div class="t" style="left:190px;top:551px;font-size:9.4px;color:#000;width:33px;text-align:right;line-height:11px;">82</div>
<div class="t" style="left:190px;top:591px;font-size:9.4px;color:#000;width:33px;text-align:right;line-height:11px;">0</div>
<div class="t" style="left:211px;top:571px;width:16px;height:12px;font-size:9.4px;line-height:12px;text-align:center;transform:rotate(-90deg);">ms</div>
<div class="t" style="left:1264px;top:552px;font-size:9.4px;color:#F00000;line-height:11px;">30</div>
<div class="t" style="left:1256px;top:575px;width:24px;height:12px;font-size:9.4px;line-height:12px;text-align:center;color:#F00000;transform:rotate(90deg);">PL%</div>
<div class="t" style="left:242px;top:601px;width:41px;text-align:center;font-size:9.4px;line-height:11px;color:#237F23;">20:44</div>
<div class="t" style="left:346px;top:601px;width:41px;text-align:center;font-size:9.4px;line-height:11px;color:#237F23;">20:45</div>
<div class="t" style="left:450px;top:601px;width:41px;text-align:center;font-size:9.4px;line-height:11px;color:#237F23;">20:46</div>
<div class="t" style="left:554px;top:601px;width:41px;text-align:center;font-size:9.4px;line-height:11px;color:#237F23;">20:47</div>
<div class="t" style="left:658px;top:601px;width:41px;text-align:center;font-size:9.4px;line-height:11px;color:#237F23;">20:48</div>
<div class="t" style="left:762px;top:601px;width:41px;text-align:center;font-size:9.4px;line-height:11px;color:#237F23;">20:49</div>
<div class="t" style="left:865px;top:601px;width:41px;text-align:center;font-size:9.4px;line-height:11px;color:#237F23;">20:50</div>
<div class="t" style="left:969px;top:601px;width:41px;text-align:center;font-size:9.4px;line-height:11px;color:#237F23;">20:51</div>
<div class="t" style="left:1073px;top:601px;width:41px;text-align:center;font-size:9.4px;line-height:11px;color:#237F23;">20:52</div>
<div class="t" style="left:1177px;top:601px;width:41px;text-align:center;font-size:9.4px;line-height:11px;color:#237F23;">20:53</div>
<div class="t" style="left:205px;top:613px;font-size:9.4px;color:#000;line-height:11px;">router01.adamtel.nl.edpnet.net (212.71.1.34) hop 5</div>
<div class="t" style="left:1125px;top:613px;font-size:9.4px;color:#000;width:150px;text-align:right;line-height:11px;">Graph time = 10 minutes</div>
<div class="t" style="left:190px;top:623px;font-size:9.4px;color:#000;width:33px;text-align:right;line-height:11px;">189</div>
<div class="t" style="left:190px;top:663px;font-size:9.4px;color:#000;width:33px;text-align:right;line-height:11px;">0</div>
<div class="t" style="left:211px;top:643px;width:16px;height:12px;font-size:9.4px;line-height:12px;text-align:center;transform:rotate(-90deg);">ms</div>
<div class="t" style="left:1264px;top:624px;font-size:9.4px;color:#F00000;line-height:11px;">30</div>
<div class="t" style="left:1256px;top:647px;width:24px;height:12px;font-size:9.4px;line-height:12px;text-align:center;color:#F00000;transform:rotate(90deg);">PL%</div>
<div class="t" style="left:242px;top:673px;width:41px;text-align:center;font-size:9.4px;line-height:11px;color:#237F23;">20:44</div>
<div class="t" style="left:346px;top:673px;width:41px;text-align:center;font-size:9.4px;line-height:11px;color:#237F23;">20:45</div>
<div class="t" style="left:450px;top:673px;width:41px;text-align:center;font-size:9.4px;line-height:11px;color:#237F23;">20:46</div>
<div class="t" style="left:554px;top:673px;width:41px;text-align:center;font-size:9.4px;line-height:11px;color:#237F23;">20:47</div>
<div class="t" style="left:658px;top:673px;width:41px;text-align:center;font-size:9.4px;line-height:11px;color:#237F23;">20:48</div>
<div class="t" style="left:762px;top:673px;width:41px;text-align:center;font-size:9.4px;line-height:11px;color:#237F23;">20:49</div>
<div class="t" style="left:865px;top:673px;width:41px;text-align:center;font-size:9.4px;line-height:11px;color:#237F23;">20:50</div>
<div class="t" style="left:969px;top:673px;width:41px;text-align:center;font-size:9.4px;line-height:11px;color:#237F23;">20:51</div>
<div class="t" style="left:1073px;top:673px;width:41px;text-align:center;font-size:9.4px;line-height:11px;color:#237F23;">20:52</div>
<div class="t" style="left:1177px;top:673px;width:41px;text-align:center;font-size:9.4px;line-height:11px;color:#237F23;">20:53</div>
<div class="t" style="left:205px;top:685px;font-size:9.4px;color:#000;line-height:11px;">s-b2-link.telia.net (213.248.71.21) hop 6</div>
<div class="t" style="left:1125px;top:685px;font-size:9.4px;color:#000;width:150px;text-align:right;line-height:11px;">Graph time = 10 minutes</div>
<div class="t" style="left:190px;top:695px;font-size:9.4px;color:#000;width:33px;text-align:right;line-height:11px;">64</div>
<div class="t" style="left:190px;top:735px;font-size:9.4px;color:#000;width:33px;text-align:right;line-height:11px;">0</div>
<div class="t" style="left:211px;top:715px;width:16px;height:12px;font-size:9.4px;line-height:12px;text-align:center;transform:rotate(-90deg);">ms</div>
<div class="t" style="left:1264px;top:696px;font-size:9.4px;color:#F00000;line-height:11px;">30</div>
<div class="t" style="left:1256px;top:719px;width:24px;height:12px;font-size:9.4px;line-height:12px;text-align:center;color:#F00000;transform:rotate(90deg);">PL%</div>
<div class="t" style="left:242px;top:745px;width:41px;text-align:center;font-size:9.4px;line-height:11px;color:#237F23;">20:44</div>
<div class="t" style="left:346px;top:745px;width:41px;text-align:center;font-size:9.4px;line-height:11px;color:#237F23;">20:45</div>
<div class="t" style="left:450px;top:745px;width:41px;text-align:center;font-size:9.4px;line-height:11px;color:#237F23;">20:46</div>
<div class="t" style="left:554px;top:745px;width:41px;text-align:center;font-size:9.4px;line-height:11px;color:#237F23;">20:47</div>
<div class="t" style="left:658px;top:745px;width:41px;text-align:center;font-size:9.4px;line-height:11px;color:#237F23;">20:48</div>
<div class="t" style="left:762px;top:745px;width:41px;text-align:center;font-size:9.4px;line-height:11px;color:#237F23;">20:49</div>
<div class="t" style="left:865px;top:745px;width:41px;text-align:center;font-size:9.4px;line-height:11px;color:#237F23;">20:50</div>
<div class="t" style="left:969px;top:745px;width:41px;text-align:center;font-size:9.4px;line-height:11px;color:#237F23;">20:51</div>
<div class="t" style="left:1073px;top:745px;width:41px;text-align:center;font-size:9.4px;line-height:11px;color:#237F23;">20:52</div>
<div class="t" style="left:1177px;top:745px;width:41px;text-align:center;font-size:9.4px;line-height:11px;color:#237F23;">20:53</div>
<div class="t" style="left:205px;top:757px;font-size:9.4px;color:#000;line-height:11px;">s-bb1-link.telia.net (213.248.66.5) hop 7</div>
<div class="t" style="left:1125px;top:757px;font-size:9.4px;color:#000;width:150px;text-align:right;line-height:11px;">Graph time = 10 minutes</div>
<div class="t" style="left:190px;top:767px;font-size:9.4px;color:#000;width:33px;text-align:right;line-height:11px;">128</div>
<div class="t" style="left:190px;top:807px;font-size:9.4px;color:#000;width:33px;text-align:right;line-height:11px;">0</div>
<div class="t" style="left:211px;top:787px;width:16px;height:12px;font-size:9.4px;line-height:12px;text-align:center;transform:rotate(-90deg);">ms</div>
<div class="t" style="left:1264px;top:768px;font-size:9.4px;color:#F00000;line-height:11px;">30</div>
<div class="t" style="left:1256px;top:791px;width:24px;height:12px;font-size:9.4px;line-height:12px;text-align:center;color:#F00000;transform:rotate(90deg);">PL%</div>
<div class="t" style="left:242px;top:817px;width:41px;text-align:center;font-size:9.4px;line-height:11px;color:#237F23;">20:44</div>
<div class="t" style="left:346px;top:817px;width:41px;text-align:center;font-size:9.4px;line-height:11px;color:#237F23;">20:45</div>
<div class="t" style="left:450px;top:817px;width:41px;text-align:center;font-size:9.4px;line-height:11px;color:#237F23;">20:46</div>
<div class="t" style="left:554px;top:817px;width:41px;text-align:center;font-size:9.4px;line-height:11px;color:#237F23;">20:47</div>
<div class="t" style="left:658px;top:817px;width:41px;text-align:center;font-size:9.4px;line-height:11px;color:#237F23;">20:48</div>
<div class="t" style="left:762px;top:817px;width:41px;text-align:center;font-size:9.4px;line-height:11px;color:#237F23;">20:49</div>
<div class="t" style="left:865px;top:817px;width:41px;text-align:center;font-size:9.4px;line-height:11px;color:#237F23;">20:50</div>
<div class="t" style="left:969px;top:817px;width:41px;text-align:center;font-size:9.4px;line-height:11px;color:#237F23;">20:51</div>
<div class="t" style="left:1073px;top:817px;width:41px;text-align:center;font-size:9.4px;line-height:11px;color:#237F23;">20:52</div>
<div class="t" style="left:1177px;top:817px;width:41px;text-align:center;font-size:9.4px;line-height:11px;color:#237F23;">20:53</div>
<div class="t" style="left:205px;top:829px;font-size:9.4px;color:#000;line-height:11px;">hbg-bb1-link.telia.net (80.91.249.8) hop 8</div>
<div class="t" style="left:1125px;top:829px;font-size:9.4px;color:#000;width:150px;text-align:right;line-height:11px;">Graph time = 10 minutes</div>
<div class="t" style="left:190px;top:839px;font-size:9.4px;color:#000;width:33px;text-align:right;line-height:11px;">139</div>
<div class="t" style="left:190px;top:879px;font-size:9.4px;color:#000;width:33px;text-align:right;line-height:11px;">0</div>
<div class="t" style="left:211px;top:859px;width:16px;height:12px;font-size:9.4px;line-height:12px;text-align:center;transform:rotate(-90deg);">ms</div>
<div class="t" style="left:1264px;top:840px;font-size:9.4px;color:#F00000;line-height:11px;">30</div>
<div class="t" style="left:1256px;top:863px;width:24px;height:12px;font-size:9.4px;line-height:12px;text-align:center;color:#F00000;transform:rotate(90deg);">PL%</div>
<div class="t" style="left:246px;top:889px;width:41px;text-align:center;font-size:9.4px;line-height:11px;color:#237F23;">20:44</div>
<div class="t" style="left:350px;top:889px;width:41px;text-align:center;font-size:9.4px;line-height:11px;color:#237F23;">20:45</div>
<div class="t" style="left:454px;top:889px;width:41px;text-align:center;font-size:9.4px;line-height:11px;color:#237F23;">20:46</div>
<div class="t" style="left:558px;top:889px;width:41px;text-align:center;font-size:9.4px;line-height:11px;color:#237F23;">20:47</div>
<div class="t" style="left:662px;top:889px;width:41px;text-align:center;font-size:9.4px;line-height:11px;color:#237F23;">20:48</div>
<div class="t" style="left:766px;top:889px;width:41px;text-align:center;font-size:9.4px;line-height:11px;color:#237F23;">20:49</div>
<div class="t" style="left:869px;top:889px;width:41px;text-align:center;font-size:9.4px;line-height:11px;color:#237F23;">20:50</div>
<div class="t" style="left:973px;top:889px;width:41px;text-align:center;font-size:9.4px;line-height:11px;color:#237F23;">20:51</div>
<div class="t" style="left:1077px;top:889px;width:41px;text-align:center;font-size:9.4px;line-height:11px;color:#237F23;">20:52</div>
<div class="t" style="left:1181px;top:889px;width:41px;text-align:center;font-size:9.4px;line-height:11px;color:#237F23;">20:53</div>
<div class="t" style="left:205px;top:903px;font-size:9.4px;color:#000;line-height:11px;">195.12.246.244 hop unknown</div>
<div class="t" style="left:1125px;top:903px;font-size:9.4px;color:#000;width:150px;text-align:right;line-height:11px;">Graph time = 10 minutes</div>
<div class="t" style="left:190px;top:913px;font-size:9.4px;color:#000;width:33px;text-align:right;line-height:11px;">10</div>
<div class="t" style="left:190px;top:953px;font-size:9.4px;color:#000;width:33px;text-align:right;line-height:11px;">0</div>
<div class="t" style="left:211px;top:933px;width:16px;height:12px;font-size:9.4px;line-height:12px;text-align:center;transform:rotate(-90deg);">ms</div>
<div class="t" style="left:1264px;top:914px;font-size:9.4px;color:#F00000;line-height:11px;">30</div>
<div class="t" style="left:1256px;top:937px;width:24px;height:12px;font-size:9.4px;line-height:12px;text-align:center;color:#F00000;transform:rotate(90deg);">PL%</div>
<div class="t" style="left:242px;top:963px;width:41px;text-align:center;font-size:9.4px;line-height:11px;color:#237F23;">20:44</div>
<div class="t" style="left:346px;top:963px;width:41px;text-align:center;font-size:9.4px;line-height:11px;color:#237F23;">20:45</div>
<div class="t" style="left:450px;top:963px;width:41px;text-align:center;font-size:9.4px;line-height:11px;color:#237F23;">20:46</div>
<div class="t" style="left:554px;top:963px;width:41px;text-align:center;font-size:9.4px;line-height:11px;color:#237F23;">20:47</div>
<div class="t" style="left:658px;top:963px;width:41px;text-align:center;font-size:9.4px;line-height:11px;color:#237F23;">20:48</div>
<div class="t" style="left:762px;top:963px;width:41px;text-align:center;font-size:9.4px;line-height:11px;color:#237F23;">20:49</div>
<div class="t" style="left:865px;top:963px;width:41px;text-align:center;font-size:9.4px;line-height:11px;color:#237F23;">20:50</div>
<div class="t" style="left:969px;top:963px;width:41px;text-align:center;font-size:9.4px;line-height:11px;color:#237F23;">20:51</div>
<div class="t" style="left:1073px;top:963px;width:41px;text-align:center;font-size:9.4px;line-height:11px;color:#237F23;">20:52</div>
<div class="t" style="left:1177px;top:963px;width:41px;text-align:center;font-size:9.4px;line-height:11px;color:#237F23;">20:53</div>
<div style="left:0px;top:977px;width:1280px;height:1px;background:#C5C2B2;"></div>
<div style="left:0px;top:978px;width:1280px;height:1px;background:#fff;"></div>
<div class="t" style="left:2px;top:981px;font-size:11px;color:#000;">Querying</div>
<div class="t" style="left:93px;top:981px;font-size:11px;color:#000;">Trace Count: 192</div>
<div class="t" style="left:229px;top:981px;font-size:11px;color:#000;">Displayed Samples: 1 to 192</div>
<div style="left:87px;top:980px;width:1px;height:13px;background:#C5C2B2;"></div>
<div style="left:88px;top:980px;width:1px;height:13px;background:#fff;"></div>
<div style="left:222px;top:980px;width:1px;height:13px;background:#C5C2B2;"></div>
<div style="left:223px;top:980px;width:1px;height:13px;background:#fff;"></div>
<div style="left:1278px;top:981px;width:2px;height:12px;background:#fff;"></div>
<div style="left:0px;top:994px;width:1280px;height:4px;background:#2B7BE8;"></div>
<div style="left:0px;top:994px;width:92px;height:4px;background:#3C9A3C;"></div>
</div></body></html>
